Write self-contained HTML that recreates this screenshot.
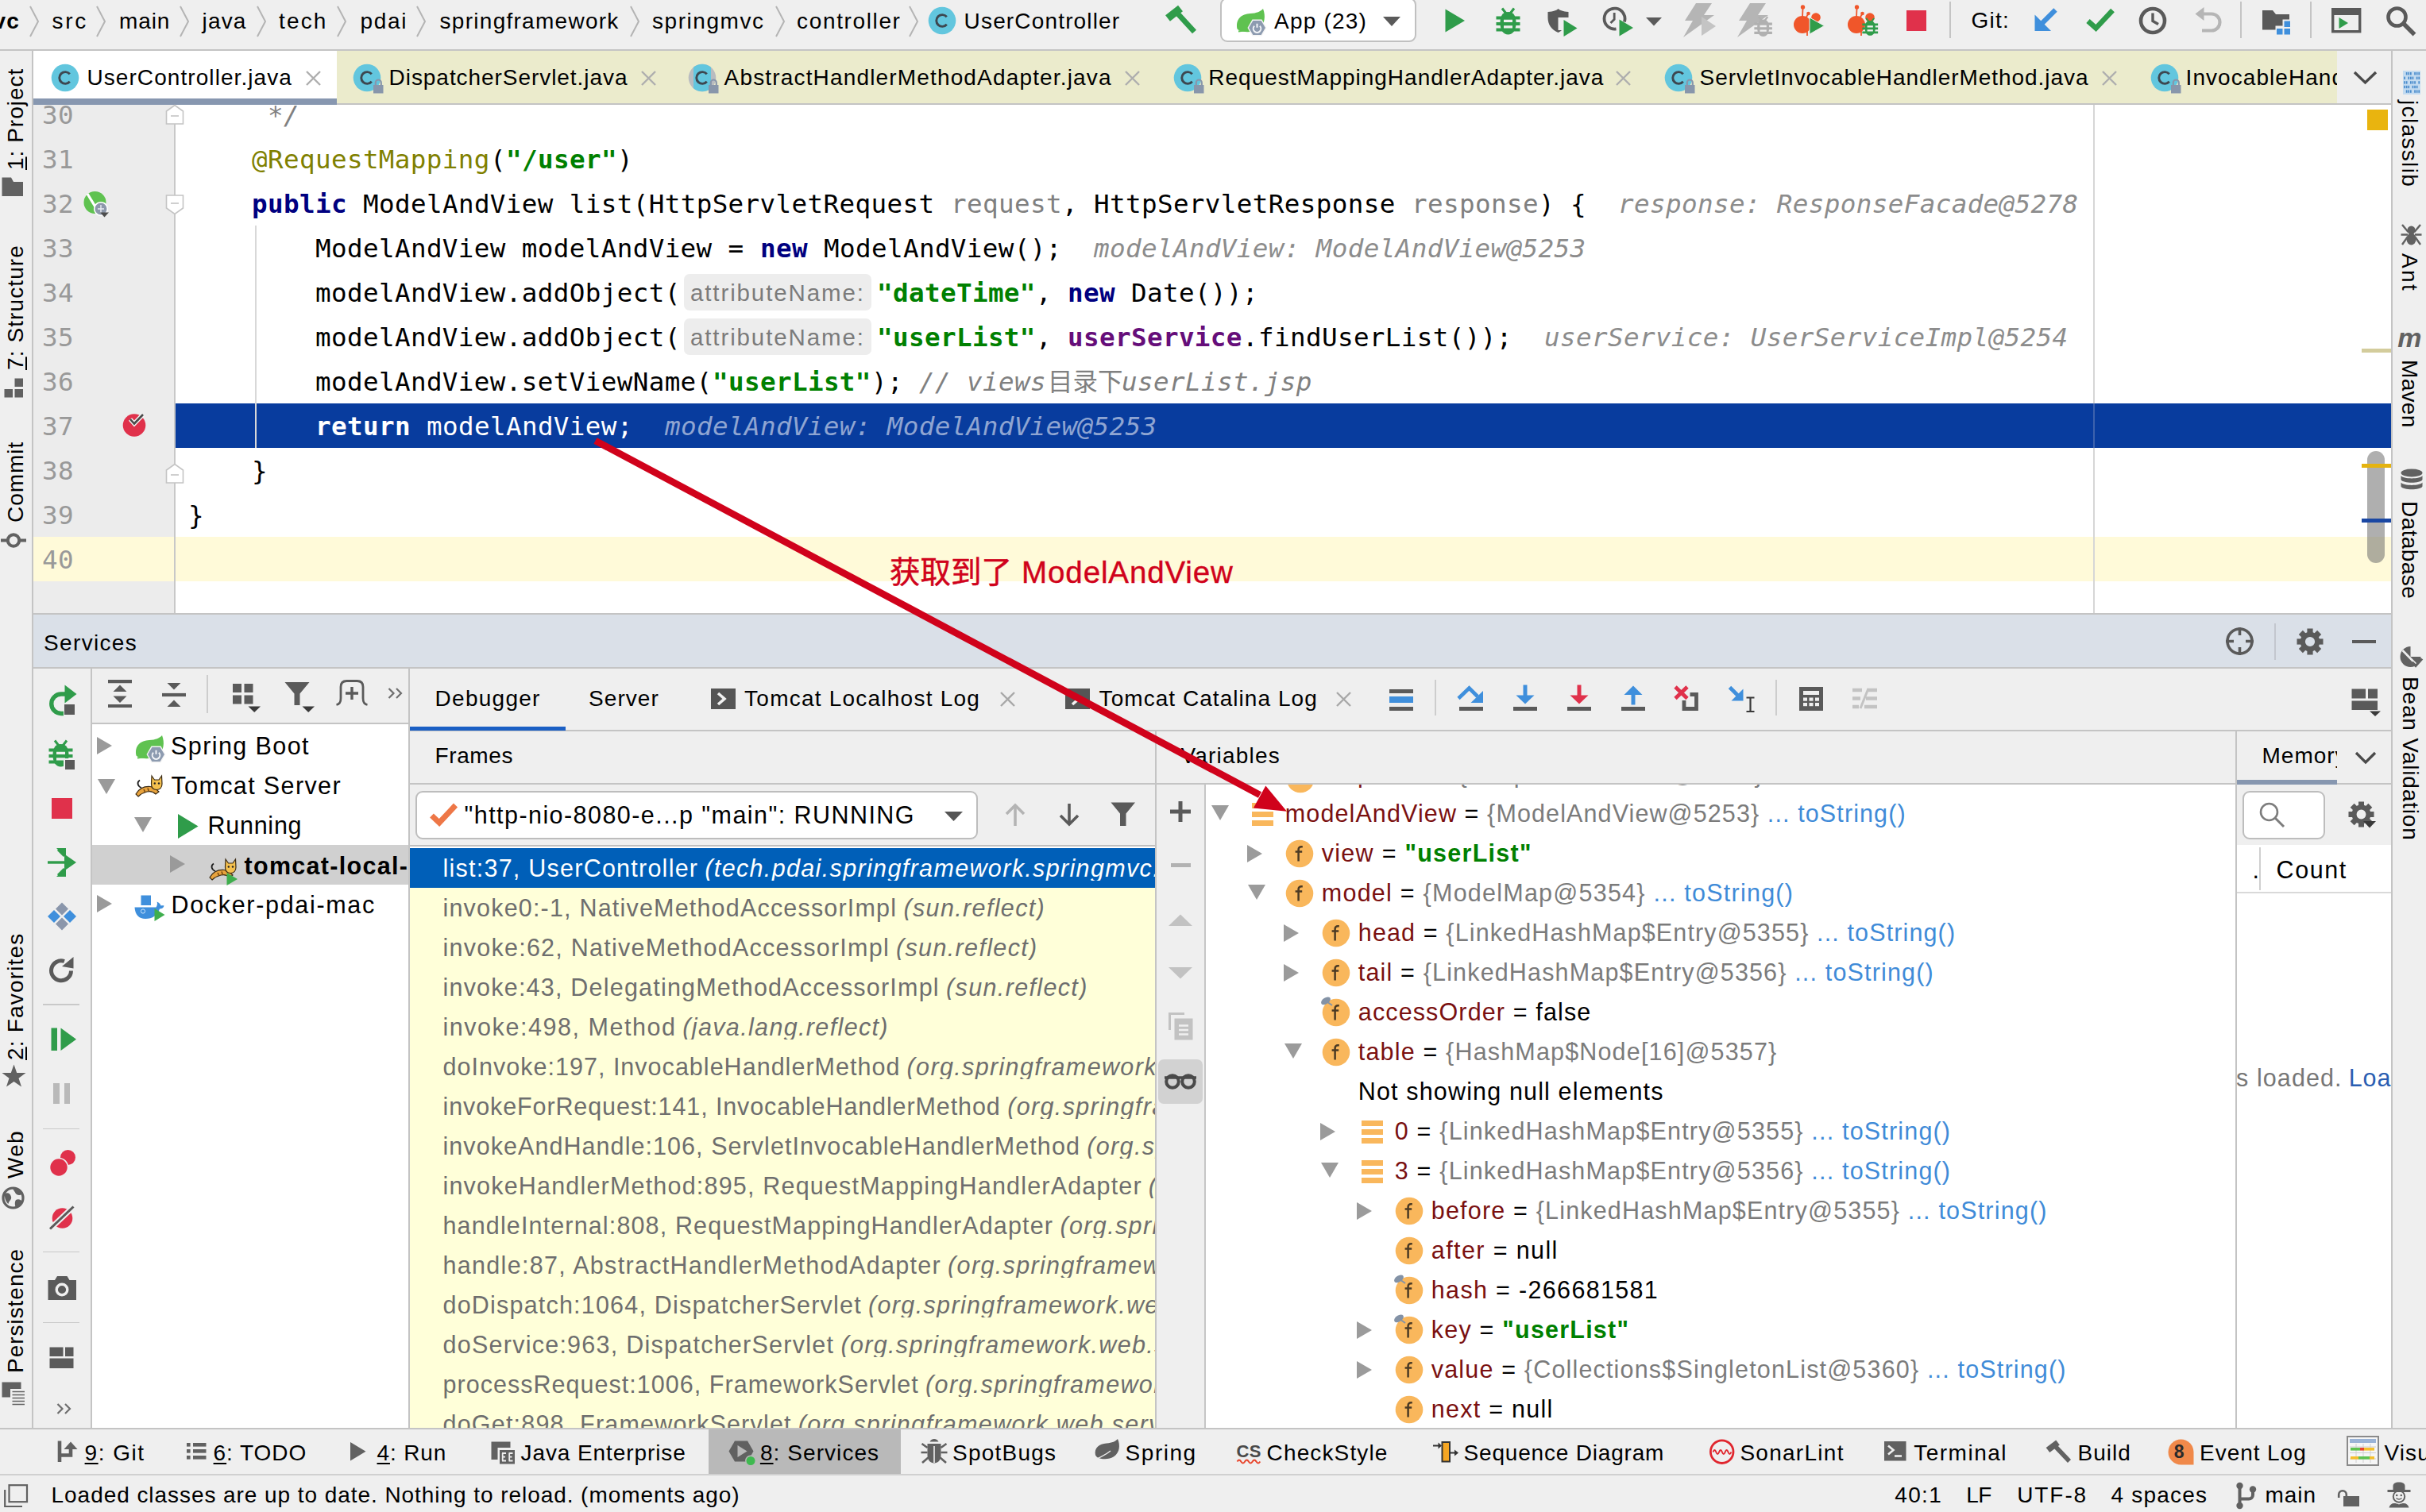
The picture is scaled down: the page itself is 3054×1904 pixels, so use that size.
<!DOCTYPE html>
<html lang="zh"><head><meta charset="utf-8"><title>IntelliJ IDEA - UserController.java</title>
<style>html,body{margin:0;padding:0;background:#efefef;width:3054px;height:1904px;overflow:hidden}#app{position:relative;width:3054px;height:1904px;overflow:hidden;font-family:"Liberation Sans","Noto Sans CJK SC",sans-serif}#app div,#app span,#app svg,#app i{position:absolute;white-space:pre}#app i{position:static}#app svg{overflow:visible}</style>
</head><body><div id="app">
<div style="left:0px;top:0px;width:3054px;height:1904px;background:#efefef;"></div>
<div style="left:0px;top:62px;width:3054px;height:2px;background:#c4c4c4;"></div>
<span style="font-family:'Liberation Sans','Noto Sans CJK SC',sans-serif;font-size:28.0px;line-height:28.0px;color:#000;font-weight:bold;letter-spacing:1.00px;left:-8.4px;top:12.7px;">vc</span>
<svg style="left:35px;top:6px;" width="16" height="42" viewBox="0 0 16 42"><path d="M3 2 L13 21 L3 40" fill="none" stroke="#b4b4b4" stroke-width="2"/></svg>
<svg style="left:119px;top:6px;" width="16" height="42" viewBox="0 0 16 42"><path d="M3 2 L13 21 L3 40" fill="none" stroke="#b4b4b4" stroke-width="2"/></svg>
<svg style="left:224px;top:6px;" width="16" height="42" viewBox="0 0 16 42"><path d="M3 2 L13 21 L3 40" fill="none" stroke="#b4b4b4" stroke-width="2"/></svg>
<svg style="left:321px;top:6px;" width="16" height="42" viewBox="0 0 16 42"><path d="M3 2 L13 21 L3 40" fill="none" stroke="#b4b4b4" stroke-width="2"/></svg>
<svg style="left:422px;top:6px;" width="16" height="42" viewBox="0 0 16 42"><path d="M3 2 L13 21 L3 40" fill="none" stroke="#b4b4b4" stroke-width="2"/></svg>
<svg style="left:522px;top:6px;" width="16" height="42" viewBox="0 0 16 42"><path d="M3 2 L13 21 L3 40" fill="none" stroke="#b4b4b4" stroke-width="2"/></svg>
<span style="font-family:'Liberation Sans','Noto Sans CJK SC',sans-serif;font-size:28.0px;line-height:28.0px;color:#000;letter-spacing:2.74px;left:65.4px;top:12.7px;">src</span>
<span style="font-family:'Liberation Sans','Noto Sans CJK SC',sans-serif;font-size:28.0px;line-height:28.0px;color:#000;letter-spacing:0.90px;left:150.0px;top:12.7px;">main</span>
<span style="font-family:'Liberation Sans','Noto Sans CJK SC',sans-serif;font-size:28.0px;line-height:28.0px;color:#000;letter-spacing:1.14px;left:254.6px;top:12.7px;">java</span>
<span style="font-family:'Liberation Sans','Noto Sans CJK SC',sans-serif;font-size:28.0px;line-height:28.0px;color:#000;letter-spacing:2.12px;left:351.1px;top:12.7px;">tech</span>
<span style="font-family:'Liberation Sans','Noto Sans CJK SC',sans-serif;font-size:28.0px;line-height:28.0px;color:#000;letter-spacing:1.62px;left:453.6px;top:12.7px;">pdai</span>
<span style="font-family:'Liberation Sans','Noto Sans CJK SC',sans-serif;font-size:28.0px;line-height:28.0px;color:#000;letter-spacing:1.27px;left:553.6px;top:12.7px;">springframework</span>
<svg style="left:791px;top:6px;" width="16" height="42" viewBox="0 0 16 42"><path d="M3 2 L13 21 L3 40" fill="none" stroke="#b4b4b4" stroke-width="2"/></svg>
<span style="font-family:'Liberation Sans','Noto Sans CJK SC',sans-serif;font-size:28.0px;line-height:28.0px;color:#000;letter-spacing:1.53px;left:821.1px;top:12.7px;">springmvc</span>
<svg style="left:974px;top:6px;" width="16" height="42" viewBox="0 0 16 42"><path d="M3 2 L13 21 L3 40" fill="none" stroke="#b4b4b4" stroke-width="2"/></svg>
<span style="font-family:'Liberation Sans','Noto Sans CJK SC',sans-serif;font-size:28.0px;line-height:28.0px;color:#000;letter-spacing:1.63px;left:1003.1px;top:12.7px;">controller</span>
<svg style="left:1142px;top:6px;" width="16" height="42" viewBox="0 0 16 42"><path d="M3 2 L13 21 L3 40" fill="none" stroke="#b4b4b4" stroke-width="2"/></svg>
<span style="font-family:'Liberation Sans','Noto Sans CJK SC',sans-serif;font-size:28.0px;line-height:28.0px;color:#000;letter-spacing:1.16px;left:1213.6px;top:12.7px;">UserController</span>
<div style="left:1536px;top:-3px;width:247px;height:56px;background:#fff;border:2px solid #c0c0c0;border-radius:9px;box-sizing:border-box;"></div>
<span style="font-family:'Liberation Sans','Noto Sans CJK SC',sans-serif;font-size:28.0px;line-height:28.0px;color:#000;letter-spacing:1.20px;left:1604.1px;top:12.7px;">App (23)</span>
<svg style="left:1741px;top:21px;" width="22" height="12" viewBox="0 0 22 12"><path d="M0 0 H22 L11 12 Z" fill="#5a5a5a"/></svg>
<div style="left:2454px;top:2px;width:2px;height:46px;background:#c4c4c4;"></div>
<div style="left:2820px;top:2px;width:2px;height:46px;background:#c4c4c4;"></div>
<div style="left:2908px;top:2px;width:2px;height:46px;background:#c4c4c4;"></div>
<span style="font-family:'Liberation Sans','Noto Sans CJK SC',sans-serif;font-size:28.0px;line-height:28.0px;color:#000;letter-spacing:1.18px;left:2481.6px;top:12.2px;">Git:</span>
<div style="left:42px;top:64px;width:2900px;height:66px;background:#ebebcc;"></div>
<div style="left:42px;top:130px;width:2968px;height:2px;background:#c4c4c4;"></div>
<div style="left:42px;top:64px;width:382px;height:68px;background:#fff;"></div>
<div style="left:42px;top:124px;width:382px;height:8px;background:#8797b0;"></div>
<div style="left:2942px;top:64px;width:68px;height:66px;background:#efefef;"></div>
<svg style="left:1166px;top:5.699999999999999px;" width="44" height="42" viewBox="0 0 44 42"><circle cx="20" cy="20" r="17.3" fill="#62c6de"/><path d="M25.8 15.2 A7.4 7.4 0 1 0 25.8 24.8" fill="none" stroke="#3d4750" stroke-width="2.9"/></svg>
<svg style="left:62px;top:77.7px;" width="44" height="42" viewBox="0 0 44 42"><circle cx="20" cy="20" r="17.3" fill="#62c6de"/><path d="M25.8 15.2 A7.4 7.4 0 1 0 25.8 24.8" fill="none" stroke="#3d4750" stroke-width="2.9"/></svg>
<span style="font-family:'Liberation Sans','Noto Sans CJK SC',sans-serif;font-size:28.0px;line-height:28.0px;color:#000;letter-spacing:1.08px;left:109.4px;top:83.5px;">UserController.java</span>
<svg style="left:384.6px;top:88.5px;" width="19" height="19" viewBox="0 0 19 19"><path d="M1 1 L18 18 M18 1 L1 18" stroke="#aeaeae" stroke-width="2.4" fill="none"/></svg>
<svg style="left:442px;top:77.5px;" width="44" height="42" viewBox="0 0 44 42"><circle cx="20" cy="20" r="17.3" fill="#62c6de"/><path d="M25.8 15.2 A7.4 7.4 0 1 0 25.8 24.8" fill="none" stroke="#3d4750" stroke-width="2.9"/><rect x="28" y="29" width="12.500" height="10.500" fill="#8896ab"/><path d="M30.800 30 V26 A3.500 3.500 0 0 1 37.800 26 V30" fill="none" stroke="#8896ab" stroke-width="2.200"/></svg>
<span style="font-family:'Liberation Sans','Noto Sans CJK SC',sans-serif;font-size:28.0px;line-height:28.0px;color:#000;letter-spacing:0.94px;left:489.6px;top:83.5px;">DispatcherServlet.java</span>
<svg style="left:806.8px;top:88.5px;" width="19" height="19" viewBox="0 0 19 19"><path d="M1 1 L18 18 M18 1 L1 18" stroke="#aeaeae" stroke-width="2.4" fill="none"/></svg>
<svg style="left:864px;top:77.5px;" width="44" height="42" viewBox="0 0 44 42"><circle cx="20" cy="20" r="17.3" fill="#b9bcc0"/><path d="M9 6.650 A17.300 17.300 0 0 1 31 6.650 L31 33.350 A17.300 17.300 0 0 1 9 33.350 Z" fill="#62c6de"/><path d="M25.8 15.2 A7.4 7.4 0 1 0 25.8 24.8" fill="none" stroke="#3d4750" stroke-width="2.9"/><rect x="28" y="29" width="12.500" height="10.500" fill="#8896ab"/><path d="M30.800 30 V26 A3.500 3.500 0 0 1 37.800 26 V30" fill="none" stroke="#8896ab" stroke-width="2.200"/></svg>
<span style="font-family:'Liberation Sans','Noto Sans CJK SC',sans-serif;font-size:28.0px;line-height:28.0px;color:#000;letter-spacing:1.16px;left:911.6px;top:83.5px;">AbstractHandlerMethodAdapter.java</span>
<svg style="left:1415.5px;top:88.5px;" width="19" height="19" viewBox="0 0 19 19"><path d="M1 1 L18 18 M18 1 L1 18" stroke="#aeaeae" stroke-width="2.4" fill="none"/></svg>
<svg style="left:1475px;top:77.5px;" width="44" height="42" viewBox="0 0 44 42"><circle cx="20" cy="20" r="17.3" fill="#62c6de"/><path d="M25.8 15.2 A7.4 7.4 0 1 0 25.8 24.8" fill="none" stroke="#3d4750" stroke-width="2.9"/><rect x="28" y="29" width="12.500" height="10.500" fill="#8896ab"/><path d="M30.800 30 V26 A3.500 3.500 0 0 1 37.800 26 V30" fill="none" stroke="#8896ab" stroke-width="2.200"/></svg>
<span style="font-family:'Liberation Sans','Noto Sans CJK SC',sans-serif;font-size:28.0px;line-height:28.0px;color:#000;letter-spacing:0.99px;left:1521.3px;top:83.5px;">RequestMappingHandlerAdapter.java</span>
<svg style="left:2033.5px;top:88.5px;" width="19" height="19" viewBox="0 0 19 19"><path d="M1 1 L18 18 M18 1 L1 18" stroke="#aeaeae" stroke-width="2.4" fill="none"/></svg>
<svg style="left:2092.5px;top:77.5px;" width="44" height="42" viewBox="0 0 44 42"><circle cx="20" cy="20" r="17.3" fill="#62c6de"/><path d="M25.8 15.2 A7.4 7.4 0 1 0 25.8 24.8" fill="none" stroke="#3d4750" stroke-width="2.9"/><rect x="28" y="29" width="12.500" height="10.500" fill="#8896ab"/><path d="M30.800 30 V26 A3.500 3.500 0 0 1 37.800 26 V30" fill="none" stroke="#8896ab" stroke-width="2.200"/></svg>
<span style="font-family:'Liberation Sans','Noto Sans CJK SC',sans-serif;font-size:28.0px;line-height:28.0px;color:#000;letter-spacing:0.95px;left:2139.6px;top:83.5px;">ServletInvocableHandlerMethod.java</span>
<svg style="left:2646px;top:88.5px;" width="19" height="19" viewBox="0 0 19 19"><path d="M1 1 L18 18 M18 1 L1 18" stroke="#aeaeae" stroke-width="2.4" fill="none"/></svg>
<svg style="left:2705px;top:77.5px;" width="44" height="42" viewBox="0 0 44 42"><circle cx="20" cy="20" r="17.3" fill="#62c6de"/><path d="M25.8 15.2 A7.4 7.4 0 1 0 25.8 24.8" fill="none" stroke="#3d4750" stroke-width="2.9"/><rect x="28" y="29" width="12.500" height="10.500" fill="#8896ab"/><path d="M30.800 30 V26 A3.500 3.500 0 0 1 37.800 26 V30" fill="none" stroke="#8896ab" stroke-width="2.200"/></svg>
<div style="left:2740px;top:64px;width:202px;height:66px;overflow:hidden"><span style="left:11.6px;top:19.5px;font-family:'Liberation Sans','Noto Sans CJK SC',sans-serif;font-size:28.0px;line-height:28.0px;letter-spacing:1.05px;color:#000">InvocableHandlerMethod.java</span></div>
<svg style="left:2962px;top:88px;" width="32" height="20" viewBox="0 0 32 20"><path d="M2 3 L15.5 16 L29 3" fill="none" stroke="#4a4a4a" stroke-width="3.4"/></svg>
<div style="left:40px;top:64px;width:2px;height:1735px;background:#c4c4c4;"></div>
<div style="left:3010px;top:64px;width:2px;height:1735px;background:#c4c4c4;"></div>
<div style="left:42px;top:132px;width:2968px;height:640px;background:#fff;"></div>
<div style="left:42px;top:132px;width:178px;height:640px;background:#ececec;"></div>
<div style="left:219px;top:132px;width:2px;height:640px;background:#c8c8c8;"></div>
<div style="left:42px;top:676px;width:2968px;height:56px;background:#fffad9;"></div>
<div style="left:219px;top:676px;width:2px;height:56px;background:#c8c8c8;"></div>
<div style="left:221px;top:508px;width:2789px;height:56px;background:#083c9e;"></div>
<div style="left:2635px;top:132px;width:2px;height:640px;background:#d6d6d6;"></div>
<div style="left:2635px;top:508px;width:2px;height:56px;background:#3d62ad;"></div>
<div style="left:321px;top:284px;width:2px;height:280px;background:#d8d8d8;"></div>
<div style="left:321px;top:508px;width:2px;height:56px;background:#d8d8d8;"></div>
<span style="font-family:'DejaVu Sans Mono','Noto Sans CJK SC',monospace;font-size:32.6px;line-height:32.6px;color:#999999;letter-spacing:0.37px;left:53.0px;top:129.1px;">30</span>
<span style="font-family:'DejaVu Sans Mono','Noto Sans CJK SC',monospace;font-size:32.6px;line-height:32.6px;color:#999999;letter-spacing:0.37px;left:53.0px;top:185.1px;">31</span>
<span style="font-family:'DejaVu Sans Mono','Noto Sans CJK SC',monospace;font-size:32.6px;line-height:32.6px;color:#999999;letter-spacing:0.37px;left:53.0px;top:241.1px;">32</span>
<span style="font-family:'DejaVu Sans Mono','Noto Sans CJK SC',monospace;font-size:32.6px;line-height:32.6px;color:#999999;letter-spacing:0.37px;left:53.0px;top:297.1px;">33</span>
<span style="font-family:'DejaVu Sans Mono','Noto Sans CJK SC',monospace;font-size:32.6px;line-height:32.6px;color:#999999;letter-spacing:0.37px;left:53.0px;top:353.1px;">34</span>
<span style="font-family:'DejaVu Sans Mono','Noto Sans CJK SC',monospace;font-size:32.6px;line-height:32.6px;color:#999999;letter-spacing:0.37px;left:53.0px;top:409.1px;">35</span>
<span style="font-family:'DejaVu Sans Mono','Noto Sans CJK SC',monospace;font-size:32.6px;line-height:32.6px;color:#999999;letter-spacing:0.37px;left:53.0px;top:465.1px;">36</span>
<span style="font-family:'DejaVu Sans Mono','Noto Sans CJK SC',monospace;font-size:32.6px;line-height:32.6px;color:#999999;letter-spacing:0.37px;left:53.0px;top:521.1px;">37</span>
<span style="font-family:'DejaVu Sans Mono','Noto Sans CJK SC',monospace;font-size:32.6px;line-height:32.6px;color:#999999;letter-spacing:0.37px;left:53.0px;top:577.1px;">38</span>
<span style="font-family:'DejaVu Sans Mono','Noto Sans CJK SC',monospace;font-size:32.6px;line-height:32.6px;color:#999999;letter-spacing:0.37px;left:53.0px;top:633.1px;">39</span>
<span style="font-family:'DejaVu Sans Mono','Noto Sans CJK SC',monospace;font-size:32.6px;line-height:32.6px;color:#999999;letter-spacing:0.37px;left:53.0px;top:689.1px;">40</span>
<span style="font-family:'DejaVu Sans Mono','Noto Sans CJK SC',monospace;font-size:32.6px;line-height:32.6px;color:#808080;font-style:italic;letter-spacing:0.37px;left:337.0px;top:129.1px;">*/</span>
<span style="font-family:'DejaVu Sans Mono','Noto Sans CJK SC',monospace;font-size:32.6px;line-height:32.6px;color:#808000;letter-spacing:0.37px;left:317.0px;top:185.1px;">@RequestMapping</span>
<span style="font-family:'DejaVu Sans Mono','Noto Sans CJK SC',monospace;font-size:32.6px;line-height:32.6px;color:#000;letter-spacing:0.37px;left:617.0px;top:185.1px;">(</span>
<span style="font-family:'DejaVu Sans Mono','Noto Sans CJK SC',monospace;font-size:32.6px;line-height:32.6px;color:#008000;font-weight:bold;letter-spacing:0.37px;left:637.0px;top:185.1px;">"/user"</span>
<span style="font-family:'DejaVu Sans Mono','Noto Sans CJK SC',monospace;font-size:32.6px;line-height:32.6px;color:#000;letter-spacing:0.37px;left:777.0px;top:185.1px;">)</span>
<span style="font-family:'DejaVu Sans Mono','Noto Sans CJK SC',monospace;font-size:32.6px;line-height:32.6px;color:#000080;font-weight:bold;letter-spacing:0.37px;left:317.0px;top:241.1px;">public</span>
<span style="font-family:'DejaVu Sans Mono','Noto Sans CJK SC',monospace;font-size:32.6px;line-height:32.6px;color:#000;letter-spacing:0.37px;left:457.0px;top:241.1px;">ModelAndView list(HttpServletRequest</span>
<span style="font-family:'DejaVu Sans Mono','Noto Sans CJK SC',monospace;font-size:32.6px;line-height:32.6px;color:#808080;letter-spacing:0.37px;left:1197.0px;top:241.1px;">request</span>
<span style="font-family:'DejaVu Sans Mono','Noto Sans CJK SC',monospace;font-size:32.6px;line-height:32.6px;color:#000;letter-spacing:0.37px;left:1337.0px;top:241.1px;">, HttpServletResponse</span>
<span style="font-family:'DejaVu Sans Mono','Noto Sans CJK SC',monospace;font-size:32.6px;line-height:32.6px;color:#808080;letter-spacing:0.37px;left:1777.0px;top:241.1px;">response</span>
<span style="font-family:'DejaVu Sans Mono','Noto Sans CJK SC',monospace;font-size:32.6px;line-height:32.6px;color:#000;letter-spacing:0.37px;left:1937.0px;top:241.1px;">) {</span>
<span style="font-family:'DejaVu Sans Mono','Noto Sans CJK SC',monospace;font-size:32.6px;line-height:32.6px;color:#8c8c8c;font-style:italic;letter-spacing:0.37px;left:2037.0px;top:241.1px;">response: ResponseFacade@5278</span>
<span style="font-family:'DejaVu Sans Mono','Noto Sans CJK SC',monospace;font-size:32.6px;line-height:32.6px;color:#000;letter-spacing:0.37px;left:397.0px;top:297.1px;">ModelAndView modelAndView =</span>
<span style="font-family:'DejaVu Sans Mono','Noto Sans CJK SC',monospace;font-size:32.6px;line-height:32.6px;color:#000080;font-weight:bold;letter-spacing:0.37px;left:957.0px;top:297.1px;">new</span>
<span style="font-family:'DejaVu Sans Mono','Noto Sans CJK SC',monospace;font-size:32.6px;line-height:32.6px;color:#000;letter-spacing:0.37px;left:1037.0px;top:297.1px;">ModelAndView();</span>
<span style="font-family:'DejaVu Sans Mono','Noto Sans CJK SC',monospace;font-size:32.6px;line-height:32.6px;color:#8c8c8c;font-style:italic;letter-spacing:0.37px;left:1377.0px;top:297.1px;">modelAndView: ModelAndView@5253</span>
<span style="font-family:'DejaVu Sans Mono','Noto Sans CJK SC',monospace;font-size:32.6px;line-height:32.6px;color:#000;letter-spacing:0.37px;left:397.0px;top:353.1px;">modelAndView.addObject(</span>
<div style="left:861px;top:345px;width:236px;height:46px;background:#ededed;border-radius:7px;"></div>
<span style="font-family:'Liberation Sans','Noto Sans CJK SC',sans-serif;font-size:29.5px;line-height:29.5px;color:#7b7b7b;letter-spacing:1.88px;left:869.0px;top:353.9px;">attributeName:</span>
<span style="font-family:'DejaVu Sans Mono','Noto Sans CJK SC',monospace;font-size:32.6px;line-height:32.6px;color:#008000;font-weight:bold;letter-spacing:0.37px;left:1104.0px;top:353.1px;">"dateTime"</span>
<span style="font-family:'DejaVu Sans Mono','Noto Sans CJK SC',monospace;font-size:32.6px;line-height:32.6px;color:#000;letter-spacing:0.37px;left:1304.0px;top:353.1px;">,</span>
<span style="font-family:'DejaVu Sans Mono','Noto Sans CJK SC',monospace;font-size:32.6px;line-height:32.6px;color:#000080;font-weight:bold;letter-spacing:0.37px;left:1344.0px;top:353.1px;">new</span>
<span style="font-family:'DejaVu Sans Mono','Noto Sans CJK SC',monospace;font-size:32.6px;line-height:32.6px;color:#000;letter-spacing:0.37px;left:1424.0px;top:353.1px;">Date());</span>
<span style="font-family:'DejaVu Sans Mono','Noto Sans CJK SC',monospace;font-size:32.6px;line-height:32.6px;color:#000;letter-spacing:0.37px;left:397.0px;top:409.1px;">modelAndView.addObject(</span>
<div style="left:861px;top:401px;width:236px;height:46px;background:#ededed;border-radius:7px;"></div>
<span style="font-family:'Liberation Sans','Noto Sans CJK SC',sans-serif;font-size:29.5px;line-height:29.5px;color:#7b7b7b;letter-spacing:1.88px;left:869.0px;top:409.9px;">attributeName:</span>
<span style="font-family:'DejaVu Sans Mono','Noto Sans CJK SC',monospace;font-size:32.6px;line-height:32.6px;color:#008000;font-weight:bold;letter-spacing:0.37px;left:1104.0px;top:409.1px;">"userList"</span>
<span style="font-family:'DejaVu Sans Mono','Noto Sans CJK SC',monospace;font-size:32.6px;line-height:32.6px;color:#000;letter-spacing:0.37px;left:1304.0px;top:409.1px;">,</span>
<span style="font-family:'DejaVu Sans Mono','Noto Sans CJK SC',monospace;font-size:32.6px;line-height:32.6px;color:#660e7a;font-weight:bold;letter-spacing:0.37px;left:1344.0px;top:409.1px;">userService</span>
<span style="font-family:'DejaVu Sans Mono','Noto Sans CJK SC',monospace;font-size:32.6px;line-height:32.6px;color:#000;letter-spacing:0.37px;left:1564.0px;top:409.1px;">.findUserList());</span>
<span style="font-family:'DejaVu Sans Mono','Noto Sans CJK SC',monospace;font-size:32.6px;line-height:32.6px;color:#8c8c8c;font-style:italic;letter-spacing:0.37px;left:1944.0px;top:409.1px;">userService: UserServiceImpl@5254</span>
<span style="font-family:'DejaVu Sans Mono','Noto Sans CJK SC',monospace;font-size:32.6px;line-height:32.6px;color:#000;letter-spacing:0.37px;left:397.0px;top:465.1px;">modelAndView.setViewName(</span>
<span style="font-family:'DejaVu Sans Mono','Noto Sans CJK SC',monospace;font-size:32.6px;line-height:32.6px;color:#008000;font-weight:bold;letter-spacing:0.37px;left:897.0px;top:465.1px;">"userList"</span>
<span style="font-family:'DejaVu Sans Mono','Noto Sans CJK SC',monospace;font-size:32.6px;line-height:32.6px;color:#000;letter-spacing:0.37px;left:1097.0px;top:465.1px;">);</span>
<span style="font-family:'DejaVu Sans Mono','Noto Sans CJK SC',monospace;font-size:32.6px;line-height:32.6px;color:#808080;font-style:italic;letter-spacing:0.37px;left:1157.0px;top:465.1px;">// views</span>
<span style="font-family:'Liberation Sans','Noto Sans CJK SC',sans-serif;font-size:31.5px;line-height:31.5px;color:#808080;left:1319.0px;top:465.7px;">目录下</span>
<span style="font-family:'DejaVu Sans Mono','Noto Sans CJK SC',monospace;font-size:32.6px;line-height:32.6px;color:#808080;font-style:italic;letter-spacing:0.37px;left:1412.0px;top:465.1px;">userList.jsp</span>
<span style="font-family:'DejaVu Sans Mono','Noto Sans CJK SC',monospace;font-size:32.6px;line-height:32.6px;color:#fff;font-weight:bold;letter-spacing:0.37px;left:397.0px;top:521.1px;">return</span>
<span style="font-family:'DejaVu Sans Mono','Noto Sans CJK SC',monospace;font-size:32.6px;line-height:32.6px;color:#fff;letter-spacing:0.37px;left:537.0px;top:521.1px;">modelAndView;</span>
<span style="font-family:'DejaVu Sans Mono','Noto Sans CJK SC',monospace;font-size:32.6px;line-height:32.6px;color:#8fa5d2;font-style:italic;letter-spacing:0.37px;left:837.0px;top:521.1px;">modelAndView: ModelAndView@5253</span>
<span style="font-family:'DejaVu Sans Mono','Noto Sans CJK SC',monospace;font-size:32.6px;line-height:32.6px;color:#000;letter-spacing:0.37px;left:317.0px;top:577.1px;">}</span>
<span style="font-family:'DejaVu Sans Mono','Noto Sans CJK SC',monospace;font-size:32.6px;line-height:32.6px;color:#000;letter-spacing:0.37px;left:237.0px;top:633.1px;">}</span>
<svg style="left:208px;top:131px;" width="24" height="26" viewBox="0 0 24 26"><path d="M1.5 25 V9 L12 1.5 L22.5 9 V25 Z" fill="#fff" stroke="#c4c4c4" stroke-width="1.6"/><path d="M7 15 H17" stroke="#c4c4c4" stroke-width="1.6"/></svg>
<svg style="left:208px;top:245px;" width="24" height="26" viewBox="0 0 24 26"><path d="M1.5 1 V17 L12 24.5 L22.5 17 V1 Z" fill="#fff" stroke="#c4c4c4" stroke-width="1.6"/><path d="M7 11 H17" stroke="#c4c4c4" stroke-width="1.6"/></svg>
<svg style="left:208px;top:583px;" width="24" height="26" viewBox="0 0 24 26"><path d="M1.5 25 V9 L12 1.5 L22.5 9 V25 Z" fill="#fff" stroke="#c4c4c4" stroke-width="1.6"/><path d="M7 15 H17" stroke="#c4c4c4" stroke-width="1.6"/></svg>
<svg style="left:105px;top:240px;" width="36" height="36" viewBox="0 0 36 36"><circle cx="14.5" cy="15" r="14" fill="#5fc250"/><path d="M5 4 L16 22" stroke="#fff" stroke-width="3.2"/><circle cx="22" cy="23" r="8.3" fill="#8d98ab" stroke="#fff" stroke-width="1.6"/><path d="M18 23 h8 M22 18 v10" stroke="#e8ecf2" stroke-width="1.4" fill="none"/><path d="M21 27.5 h11 l-5.5 6 z" fill="#4d4d4d"/></svg>
<svg style="left:152px;top:517px;" width="36" height="36" viewBox="0 0 36 36"><circle cx="17" cy="18.5" r="14.3" fill="#e0314b"/><path d="M12 11 L17 16.5 L28 5" fill="none" stroke="#f4f4f4" stroke-width="5.5"/><path d="M12 11 L17 16.5 L28 5" fill="none" stroke="#4a4a4a" stroke-width="2.6"/></svg>
<div style="left:2980px;top:138px;width:26px;height:26px;background:#e9b40f;"></div>
<div style="left:2973px;top:439px;width:37px;height:5px;background:#d3cc9c;"></div>
<div style="left:2980px;top:568px;width:22px;height:141px;background:rgba(110,110,110,0.55);border-radius:11px;"></div>
<div style="left:2973px;top:584px;width:37px;height:5px;background:#e4b310;"></div>
<div style="left:2973px;top:653px;width:37px;height:5px;background:#1a47a3;"></div>
<div style="left:42px;top:772px;width:2968px;height:2px;background:#c4c4c4;"></div>
<div style="left:42px;top:774px;width:2968px;height:66px;background:#dae0e8;"></div>
<div style="left:42px;top:840px;width:2968px;height:2px;background:#c4c4c4;"></div>
<span style="font-family:'Liberation Sans','Noto Sans CJK SC',sans-serif;font-size:28.0px;line-height:28.0px;color:#000;letter-spacing:1.32px;left:55.1px;top:795.7px;">Services</span>
<div style="left:42px;top:842px;width:2968px;height:956px;background:#efefef;"></div>
<div style="left:114px;top:842px;width:2px;height:956px;background:#c4c4c4;"></div>
<div style="left:116px;top:912px;width:398px;height:886px;background:#fff;"></div>
<div style="left:116px;top:910px;width:398px;height:2px;background:#c4c4c4;"></div>
<div style="left:514px;top:842px;width:2px;height:956px;background:#c4c4c4;"></div>
<div style="left:116px;top:1064px;width:398px;height:50px;background:#d0d0d0;"></div>
<svg style="left:122px;top:927.5px;" width="19" height="22" viewBox="0 0 19 22"><path d="M0 0 L19 11.0 L0 22 Z" fill="#9a9a9a"/></svg>
<span style="font-family:'Liberation Sans','Noto Sans CJK SC',sans-serif;font-size:30.5px;line-height:30.5px;color:#000;letter-spacing:1.42px;left:215.0px;top:924.1px;">Spring Boot</span>
<svg style="left:123px;top:981px;" width="22" height="19" viewBox="0 0 22 19"><path d="M0 0 H22 L11.0 19 Z" fill="#9a9a9a"/></svg>
<span style="font-family:'Liberation Sans','Noto Sans CJK SC',sans-serif;font-size:30.5px;line-height:30.5px;color:#000;letter-spacing:1.37px;left:215.5px;top:974.1px;">Tomcat Server</span>
<svg style="left:169px;top:1028.5px;" width="22" height="19" viewBox="0 0 22 19"><path d="M0 0 H22 L11.0 19 Z" fill="#9a9a9a"/></svg>
<svg style="left:223.5px;top:1024.5px;" width="26" height="31" viewBox="0 0 26 31"><path d="M0 0 L25.5 15.5 L0 31 Z" fill="#2f9c4a"/></svg>
<span style="font-family:'Liberation Sans','Noto Sans CJK SC',sans-serif;font-size:30.5px;line-height:30.5px;color:#000;letter-spacing:0.74px;left:261.5px;top:1024.1px;">Running</span>
<svg style="left:214px;top:1077px;" width="19" height="22" viewBox="0 0 19 22"><path d="M0 0 L19 11.0 L0 22 Z" fill="#9a9a9a"/></svg>
<div style="left:300px;top:1064px;width:214px;height:50px;overflow:hidden"><span style="left:7.5px;top:10.5px;font-family:'Liberation Sans','Noto Sans CJK SC',sans-serif;font-size:30.5px;line-height:30.5px;font-weight:bold;letter-spacing:1.3px;color:#000">tomcat-local-springmvc</span></div>
<svg style="left:122px;top:1127px;" width="19" height="22" viewBox="0 0 19 22"><path d="M0 0 L19 11.0 L0 22 Z" fill="#9a9a9a"/></svg>
<span style="font-family:'Liberation Sans','Noto Sans CJK SC',sans-serif;font-size:30.5px;line-height:30.5px;color:#000;letter-spacing:1.68px;left:215.5px;top:1124.1px;">Docker-pdai-mac</span>
<div style="left:516px;top:919px;width:2494px;height:2px;background:#c4c4c4;"></div>
<div style="left:516px;top:914.5px;width:196px;height:5px;background:#1b5fc4;"></div>
<span style="font-family:'Liberation Sans','Noto Sans CJK SC',sans-serif;font-size:28.0px;line-height:28.0px;color:#000;letter-spacing:1.26px;left:547.6px;top:866.2px;">Debugger</span>
<span style="font-family:'Liberation Sans','Noto Sans CJK SC',sans-serif;font-size:28.0px;line-height:28.0px;color:#000;letter-spacing:1.07px;left:741.0px;top:866.2px;">Server</span>
<svg style="left:894.5px;top:867px;" width="31" height="26" viewBox="0 0 31 26"><rect width="31" height="26" fill="#555"/><path d="M9 6 L17 13 L9 20" fill="none" stroke="#f2f2f2" stroke-width="3.6"/></svg>
<span style="font-family:'Liberation Sans','Noto Sans CJK SC',sans-serif;font-size:28.0px;line-height:28.0px;color:#000;letter-spacing:1.23px;left:937.1px;top:866.2px;">Tomcat Localhost Log</span>
<svg style="left:1258.5px;top:871px;" width="19" height="19" viewBox="0 0 19 19"><path d="M1 1 L18 18 M18 1 L1 18" stroke="#a8a8a8" stroke-width="2.4" fill="none"/></svg>
<svg style="left:1341px;top:867px;" width="31" height="26" viewBox="0 0 31 26"><rect width="31" height="26" fill="#555"/><path d="M9 6 L17 13 L9 20" fill="none" stroke="#f2f2f2" stroke-width="3.6"/></svg>
<span style="font-family:'Liberation Sans','Noto Sans CJK SC',sans-serif;font-size:28.0px;line-height:28.0px;color:#000;letter-spacing:1.05px;left:1383.6px;top:866.2px;">Tomcat Catalina Log</span>
<svg style="left:1682px;top:871px;" width="19" height="19" viewBox="0 0 19 19"><path d="M1 1 L18 18 M18 1 L1 18" stroke="#a8a8a8" stroke-width="2.4" fill="none"/></svg>
<div style="left:1806px;top:856px;width:2px;height:45px;background:#cdcdcd;"></div>
<div style="left:2235px;top:856px;width:2px;height:45px;background:#cdcdcd;"></div>
<span style="font-family:'Liberation Sans','Noto Sans CJK SC',sans-serif;font-size:28.0px;line-height:28.0px;color:#000;letter-spacing:0.58px;left:547.6px;top:937.7px;">Frames</span>
<div style="left:516px;top:986px;width:2494px;height:2px;background:#c4c4c4;"></div>
<div style="left:1454px;top:921px;width:2px;height:877px;background:#c4c4c4;"></div>
<div style="left:523px;top:996px;width:708px;height:61px;background:#fff;border:2px solid #bdbdbd;border-radius:9px;box-sizing:border-box;"></div>
<svg style="left:540px;top:1010px;" width="38" height="30" viewBox="0 0 38 30"><path d="M3.5 17 L13 26 L33.5 4" fill="none" stroke="#ee7747" stroke-width="7"/></svg>
<span style="font-family:'Liberation Sans','Noto Sans CJK SC',sans-serif;font-size:30.5px;line-height:30.5px;color:#000;letter-spacing:1.44px;left:584.5px;top:1011.1px;">"htt<span style="position:static">p</span>-nio-8080-e...p "main": RUNNING</span>
<svg style="left:1189px;top:1022px;" width="23" height="12" viewBox="0 0 23 12"><path d="M0 0 H23 L11.5 12 Z" fill="#555"/></svg>
<div style="left:516px;top:1064px;width:938px;height:2px;background:#bfbfbf;"></div>
<div style="left:516px;top:1066px;width:938px;height:2px;background:#fff;"></div>
<div style="left:516px;top:1068px;width:938px;height:730px;background:#ffffd9;"></div>
<div style="left:516px;top:1068px;width:938px;height:50px;background:#005fb8;"></div>
<span style="font-family:'Liberation Sans','Noto Sans CJK SC',sans-serif;font-size:30.5px;line-height:30.5px;color:#fff;letter-spacing:1.24px;left:557.5px;top:1078.1px;">list:37, UserController</span>
<span style="font-family:'Liberation Sans','Noto Sans CJK SC',sans-serif;font-size:30.5px;line-height:30.5px;color:#fff;font-style:italic;letter-spacing:1.35px;left:887.3px;top:1078.1px;width:566.7px;overflow:hidden;">(tech.pdai.springframework.springmvc.controller)</span>
<span style="font-family:'Liberation Sans','Noto Sans CJK SC',sans-serif;font-size:30.5px;line-height:30.5px;color:#6e6e6e;letter-spacing:1.19px;left:557.5px;top:1128.1px;">invoke0:-1, NativeMethodAccessorImpl</span>
<span style="font-family:'Liberation Sans','Noto Sans CJK SC',sans-serif;font-size:30.5px;line-height:30.5px;color:#6e6e6e;font-style:italic;letter-spacing:1.35px;left:1137.5px;top:1128.1px;width:316.5px;overflow:hidden;">(sun.reflect)</span>
<span style="font-family:'Liberation Sans','Noto Sans CJK SC',sans-serif;font-size:30.5px;line-height:30.5px;color:#6e6e6e;letter-spacing:1.25px;left:557.5px;top:1178.1px;">invoke:62, NativeMethodAccessorImpl</span>
<span style="font-family:'Liberation Sans','Noto Sans CJK SC',sans-serif;font-size:30.5px;line-height:30.5px;color:#6e6e6e;font-style:italic;letter-spacing:1.35px;left:1128.0px;top:1178.1px;width:326.0px;overflow:hidden;">(sun.reflect)</span>
<span style="font-family:'Liberation Sans','Noto Sans CJK SC',sans-serif;font-size:30.5px;line-height:30.5px;color:#6e6e6e;letter-spacing:1.21px;left:557.5px;top:1228.1px;">invoke:43, DelegatingMethodAccessorImpl</span>
<span style="font-family:'Liberation Sans','Noto Sans CJK SC',sans-serif;font-size:30.5px;line-height:30.5px;color:#6e6e6e;font-style:italic;letter-spacing:1.35px;left:1191.1px;top:1228.1px;width:262.9px;overflow:hidden;">(sun.reflect)</span>
<span style="font-family:'Liberation Sans','Noto Sans CJK SC',sans-serif;font-size:30.5px;line-height:30.5px;color:#6e6e6e;letter-spacing:1.54px;left:557.5px;top:1278.1px;">invoke:498, Method</span>
<span style="font-family:'Liberation Sans','Noto Sans CJK SC',sans-serif;font-size:30.5px;line-height:30.5px;color:#6e6e6e;font-style:italic;letter-spacing:1.35px;left:859.3px;top:1278.1px;width:594.7px;overflow:hidden;">(java.lang.reflect)</span>
<span style="font-family:'Liberation Sans','Noto Sans CJK SC',sans-serif;font-size:30.5px;line-height:30.5px;color:#6e6e6e;letter-spacing:1.02px;left:557.5px;top:1328.1px;">doInvoke:197, InvocableHandlerMethod</span>
<span style="font-family:'Liberation Sans','Noto Sans CJK SC',sans-serif;font-size:30.5px;line-height:30.5px;color:#6e6e6e;font-style:italic;letter-spacing:1.35px;left:1141.6px;top:1328.1px;width:312.4px;overflow:hidden;">(org.springframework.web.method.support)</span>
<span style="font-family:'Liberation Sans','Noto Sans CJK SC',sans-serif;font-size:30.5px;line-height:30.5px;color:#6e6e6e;letter-spacing:0.89px;left:557.5px;top:1378.1px;">invokeForRequest:141, InvocableHandlerMethod</span>
<span style="font-family:'Liberation Sans','Noto Sans CJK SC',sans-serif;font-size:30.5px;line-height:30.5px;color:#6e6e6e;font-style:italic;letter-spacing:1.35px;left:1268.2px;top:1378.1px;width:185.8px;overflow:hidden;">(org.springframework.web.method.support)</span>
<span style="font-family:'Liberation Sans','Noto Sans CJK SC',sans-serif;font-size:30.5px;line-height:30.5px;color:#6e6e6e;letter-spacing:1.06px;left:557.5px;top:1428.1px;">invokeAndHandle:106, ServletInvocableHandlerMethod</span>
<span style="font-family:'Liberation Sans','Noto Sans CJK SC',sans-serif;font-size:30.5px;line-height:30.5px;color:#6e6e6e;font-style:italic;letter-spacing:1.35px;left:1368.3px;top:1428.1px;width:85.7px;overflow:hidden;">(org.springframework.web.servlet.mvc.method.annotation)</span>
<span style="font-family:'Liberation Sans','Noto Sans CJK SC',sans-serif;font-size:30.5px;line-height:30.5px;color:#6e6e6e;letter-spacing:1.19px;left:557.5px;top:1478.1px;">invokeHandlerMethod:895, RequestMappingHandlerAdapter</span>
<span style="font-family:'Liberation Sans','Noto Sans CJK SC',sans-serif;font-size:30.5px;line-height:30.5px;color:#6e6e6e;font-style:italic;letter-spacing:1.35px;left:1445.8px;top:1478.1px;width:8.2px;overflow:hidden;">(org.springframework.web.servlet.mvc.method.annotation)</span>
<span style="font-family:'Liberation Sans','Noto Sans CJK SC',sans-serif;font-size:30.5px;line-height:30.5px;color:#6e6e6e;letter-spacing:1.14px;left:557.5px;top:1528.1px;">handleInternal:808, RequestMappingHandlerAdapter</span>
<span style="font-family:'Liberation Sans','Noto Sans CJK SC',sans-serif;font-size:30.5px;line-height:30.5px;color:#6e6e6e;font-style:italic;letter-spacing:1.35px;left:1334.5px;top:1528.1px;width:119.5px;overflow:hidden;">(org.springframework.web.servlet.mvc.method.annotation)</span>
<span style="font-family:'Liberation Sans','Noto Sans CJK SC',sans-serif;font-size:30.5px;line-height:30.5px;color:#6e6e6e;letter-spacing:1.31px;left:557.5px;top:1578.1px;">handle:87, AbstractHandlerMethodAdapter</span>
<span style="font-family:'Liberation Sans','Noto Sans CJK SC',sans-serif;font-size:30.5px;line-height:30.5px;color:#6e6e6e;font-style:italic;letter-spacing:1.35px;left:1193.1px;top:1578.1px;width:260.9px;overflow:hidden;">(org.springframework.web.servlet.mvc.method)</span>
<span style="font-family:'Liberation Sans','Noto Sans CJK SC',sans-serif;font-size:30.5px;line-height:30.5px;color:#6e6e6e;letter-spacing:1.20px;left:557.5px;top:1628.1px;">doDispatch:1064, DispatcherServlet</span>
<span style="font-family:'Liberation Sans','Noto Sans CJK SC',sans-serif;font-size:30.5px;line-height:30.5px;color:#6e6e6e;font-style:italic;letter-spacing:1.35px;left:1093.0px;top:1628.1px;width:361.0px;overflow:hidden;">(org.springframework.web.servlet)</span>
<span style="font-family:'Liberation Sans','Noto Sans CJK SC',sans-serif;font-size:30.5px;line-height:30.5px;color:#6e6e6e;letter-spacing:1.25px;left:557.5px;top:1678.1px;">doService:963, DispatcherServlet</span>
<span style="font-family:'Liberation Sans','Noto Sans CJK SC',sans-serif;font-size:30.5px;line-height:30.5px;color:#6e6e6e;font-style:italic;letter-spacing:1.35px;left:1058.4px;top:1678.1px;width:395.6px;overflow:hidden;">(org.springframework.web.servlet)</span>
<span style="font-family:'Liberation Sans','Noto Sans CJK SC',sans-serif;font-size:30.5px;line-height:30.5px;color:#6e6e6e;letter-spacing:1.03px;left:557.5px;top:1728.1px;">processRequest:1006, FrameworkServlet</span>
<span style="font-family:'Liberation Sans','Noto Sans CJK SC',sans-serif;font-size:30.5px;line-height:30.5px;color:#6e6e6e;font-style:italic;letter-spacing:1.35px;left:1165.1px;top:1728.1px;width:288.9px;overflow:hidden;">(org.springframework.web.servlet)</span>
<span style="font-family:'Liberation Sans','Noto Sans CJK SC',sans-serif;font-size:30.5px;line-height:30.5px;color:#6e6e6e;letter-spacing:1.20px;left:557.5px;top:1778.1px;">doGet:898, FrameworkServlet</span>
<span style="font-family:'Liberation Sans','Noto Sans CJK SC',sans-serif;font-size:30.5px;line-height:30.5px;color:#6e6e6e;font-style:italic;letter-spacing:1.35px;left:1004.8px;top:1778.1px;width:449.2px;overflow:hidden;">(org.springframework.web.servlet)</span>
<span style="font-family:'Liberation Sans','Noto Sans CJK SC',sans-serif;font-size:28.0px;line-height:28.0px;color:#000;letter-spacing:1.22px;left:1486.4px;top:938.2px;">Variables</span>
<div style="left:1456px;top:988px;width:60px;height:810px;background:#efefef;"></div>
<div style="left:1516px;top:988px;width:2px;height:810px;background:#c6c6c6;"></div>
<div style="left:1518px;top:988px;width:1296px;height:810px;background:#fff;"></div>
<div style="left:1458px;top:1334px;width:56px;height:56px;background:#d2d2d2;border-radius:7px;"></div>
<svg style="left:1576.3px;top:1010.5px;" width="27" height="29" viewBox="0 0 27 29"><rect y="0" width="27" height="7" fill="#f9b75c"/><rect y="11" width="27" height="7" fill="#f9b75c"/><rect y="22" width="27" height="7" fill="#f9b75c"/></svg>
<svg style="left:1525.3px;top:1014px;" width="22" height="19" viewBox="0 0 22 19"><path d="M0 0 H22 L11.0 19 Z" fill="#9b9b9b"/></svg>
<span style="font-family:'Liberation Sans','Noto Sans CJK SC',sans-serif;font-size:30.5px;line-height:30.5px;color:#000;letter-spacing:1.11px;left:1617.8px;top:1009.1px;"><span style="position:static;color:#7a1010;">modelAndView</span><span style="position:static;color:#000;"> = </span><span style="position:static;color:#7b7b7b;">{ModelAndView@5253}</span><span style="position:static;color:#3f8bd8;"> ... toString()</span></span>
<svg style="left:1614.5px;top:1054px;" width="42" height="42" viewBox="0 0 42 42"><circle cx="21" cy="21" r="17.3" fill="#f9b75c"/><path d="M24.8 12.2 h-1.6 a3.6 3.6 0 0 0 -3.6 3.6 V30.5 M15.6 18.6 h8.6" fill="none" stroke="#4b3a24" stroke-width="2.5"/></svg>
<svg style="left:1569.8px;top:1064px;" width="19" height="22" viewBox="0 0 19 22"><path d="M0 0 L19 11.0 L0 22 Z" fill="#9b9b9b"/></svg>
<span style="font-family:'Liberation Sans','Noto Sans CJK SC',sans-serif;font-size:30.5px;line-height:30.5px;color:#000;letter-spacing:1.27px;left:1663.8px;top:1059.1px;"><span style="position:static;color:#7a1010;">view</span><span style="position:static;color:#000;"> = </span><span style="position:static;color:#008000;font-weight:bold;">"userList"</span></span>
<svg style="left:1614.5px;top:1104px;" width="42" height="42" viewBox="0 0 42 42"><circle cx="21" cy="21" r="17.3" fill="#f9b75c"/><path d="M24.8 12.2 h-1.6 a3.6 3.6 0 0 0 -3.6 3.6 V30.5 M15.6 18.6 h8.6" fill="none" stroke="#4b3a24" stroke-width="2.5"/></svg>
<svg style="left:1571.3px;top:1114px;" width="22" height="19" viewBox="0 0 22 19"><path d="M0 0 H22 L11.0 19 Z" fill="#9b9b9b"/></svg>
<span style="font-family:'Liberation Sans','Noto Sans CJK SC',sans-serif;font-size:30.5px;line-height:30.5px;color:#000;letter-spacing:1.24px;left:1663.8px;top:1109.1px;"><span style="position:static;color:#7a1010;">model</span><span style="position:static;color:#000;"> = </span><span style="position:static;color:#7b7b7b;">{ModelMap@5354}</span><span style="position:static;color:#3f8bd8;"> ... toString()</span></span>
<svg style="left:1660.5px;top:1154px;" width="42" height="42" viewBox="0 0 42 42"><circle cx="21" cy="21" r="17.3" fill="#f9b75c"/><path d="M24.8 12.2 h-1.6 a3.6 3.6 0 0 0 -3.6 3.6 V30.5 M15.6 18.6 h8.6" fill="none" stroke="#4b3a24" stroke-width="2.5"/></svg>
<svg style="left:1615.8px;top:1164px;" width="19" height="22" viewBox="0 0 19 22"><path d="M0 0 L19 11.0 L0 22 Z" fill="#9b9b9b"/></svg>
<span style="font-family:'Liberation Sans','Noto Sans CJK SC',sans-serif;font-size:30.5px;line-height:30.5px;color:#000;letter-spacing:1.13px;left:1709.8px;top:1159.1px;"><span style="position:static;color:#7a1010;">head</span><span style="position:static;color:#000;"> = </span><span style="position:static;color:#7b7b7b;">{LinkedHashMap$Entry@5355}</span><span style="position:static;color:#3f8bd8;"> ... toString()</span></span>
<svg style="left:1660.5px;top:1204px;" width="42" height="42" viewBox="0 0 42 42"><circle cx="21" cy="21" r="17.3" fill="#f9b75c"/><path d="M24.8 12.2 h-1.6 a3.6 3.6 0 0 0 -3.6 3.6 V30.5 M15.6 18.6 h8.6" fill="none" stroke="#4b3a24" stroke-width="2.5"/></svg>
<svg style="left:1615.8px;top:1214px;" width="19" height="22" viewBox="0 0 19 22"><path d="M0 0 L19 11.0 L0 22 Z" fill="#9b9b9b"/></svg>
<span style="font-family:'Liberation Sans','Noto Sans CJK SC',sans-serif;font-size:30.5px;line-height:30.5px;color:#000;letter-spacing:1.16px;left:1709.8px;top:1209.1px;"><span style="position:static;color:#7a1010;">tail</span><span style="position:static;color:#000;"> = </span><span style="position:static;color:#7b7b7b;">{LinkedHashMap$Entry@5356}</span><span style="position:static;color:#3f8bd8;"> ... toString()</span></span>
<svg style="left:1660.5px;top:1254px;" width="42" height="42" viewBox="0 0 42 42"><circle cx="21" cy="21" r="17.3" fill="#f9b75c"/><path d="M24.8 12.2 h-1.6 a3.6 3.6 0 0 0 -3.6 3.6 V30.5 M15.6 18.6 h8.6" fill="none" stroke="#4b3a24" stroke-width="2.5"/><ellipse cx="8" cy="6.3" rx="6.6" ry="3.9" transform="rotate(-33 8 6.3)" fill="#8392a6"/><path d="M11 8.5 L16 12" stroke="#8392a6" stroke-width="2"/></svg>
<span style="font-family:'Liberation Sans','Noto Sans CJK SC',sans-serif;font-size:30.5px;line-height:30.5px;color:#000;letter-spacing:1.13px;left:1709.8px;top:1259.1px;"><span style="position:static;color:#7a1010;">accessOrder</span><span style="position:static;color:#000;"> = </span><span style="position:static;color:#000;">false</span></span>
<svg style="left:1660.5px;top:1304px;" width="42" height="42" viewBox="0 0 42 42"><circle cx="21" cy="21" r="17.3" fill="#f9b75c"/><path d="M24.8 12.2 h-1.6 a3.6 3.6 0 0 0 -3.6 3.6 V30.5 M15.6 18.6 h8.6" fill="none" stroke="#4b3a24" stroke-width="2.5"/></svg>
<svg style="left:1617.3px;top:1314px;" width="22" height="19" viewBox="0 0 22 19"><path d="M0 0 H22 L11.0 19 Z" fill="#9b9b9b"/></svg>
<span style="font-family:'Liberation Sans','Noto Sans CJK SC',sans-serif;font-size:30.5px;line-height:30.5px;color:#000;letter-spacing:1.17px;left:1709.8px;top:1309.1px;"><span style="position:static;color:#7a1010;">table</span><span style="position:static;color:#000;"> = </span><span style="position:static;color:#7b7b7b;">{HashMap$Node[16]@5357}</span></span>
<span style="font-family:'Liberation Sans','Noto Sans CJK SC',sans-serif;font-size:30.5px;line-height:30.5px;color:#000;letter-spacing:1.15px;left:1709.8px;top:1359.1px;"><span style="position:static;color:#000;">Not showing null elements</span></span>
<svg style="left:1714.3px;top:1410.5px;" width="27" height="29" viewBox="0 0 27 29"><rect y="0" width="27" height="7" fill="#f9b75c"/><rect y="11" width="27" height="7" fill="#f9b75c"/><rect y="22" width="27" height="7" fill="#f9b75c"/></svg>
<svg style="left:1661.8px;top:1414px;" width="19" height="22" viewBox="0 0 19 22"><path d="M0 0 L19 11.0 L0 22 Z" fill="#9b9b9b"/></svg>
<span style="font-family:'Liberation Sans','Noto Sans CJK SC',sans-serif;font-size:30.5px;line-height:30.5px;color:#000;letter-spacing:1.18px;left:1755.8px;top:1409.1px;"><span style="position:static;color:#7a1010;">0</span><span style="position:static;color:#000;"> = </span><span style="position:static;color:#7b7b7b;">{LinkedHashMap$Entry@5355}</span><span style="position:static;color:#3f8bd8;"> ... toString()</span></span>
<svg style="left:1714.3px;top:1460.5px;" width="27" height="29" viewBox="0 0 27 29"><rect y="0" width="27" height="7" fill="#f9b75c"/><rect y="11" width="27" height="7" fill="#f9b75c"/><rect y="22" width="27" height="7" fill="#f9b75c"/></svg>
<svg style="left:1663.3px;top:1464px;" width="22" height="19" viewBox="0 0 22 19"><path d="M0 0 H22 L11.0 19 Z" fill="#9b9b9b"/></svg>
<span style="font-family:'Liberation Sans','Noto Sans CJK SC',sans-serif;font-size:30.5px;line-height:30.5px;color:#000;letter-spacing:1.18px;left:1755.8px;top:1459.1px;"><span style="position:static;color:#7a1010;">3</span><span style="position:static;color:#000;"> = </span><span style="position:static;color:#7b7b7b;">{LinkedHashMap$Entry@5356}</span><span style="position:static;color:#3f8bd8;"> ... toString()</span></span>
<svg style="left:1752.5px;top:1504px;" width="42" height="42" viewBox="0 0 42 42"><circle cx="21" cy="21" r="17.3" fill="#f9b75c"/><path d="M24.8 12.2 h-1.6 a3.6 3.6 0 0 0 -3.6 3.6 V30.5 M15.6 18.6 h8.6" fill="none" stroke="#4b3a24" stroke-width="2.5"/></svg>
<svg style="left:1707.8px;top:1514px;" width="19" height="22" viewBox="0 0 19 22"><path d="M0 0 L19 11.0 L0 22 Z" fill="#9b9b9b"/></svg>
<span style="font-family:'Liberation Sans','Noto Sans CJK SC',sans-serif;font-size:30.5px;line-height:30.5px;color:#000;letter-spacing:1.18px;left:1801.8px;top:1509.1px;"><span style="position:static;color:#7a1010;">before</span><span style="position:static;color:#000;"> = </span><span style="position:static;color:#7b7b7b;">{LinkedHashMap$Entry@5355}</span><span style="position:static;color:#3f8bd8;"> ... toString()</span></span>
<svg style="left:1752.5px;top:1554px;" width="42" height="42" viewBox="0 0 42 42"><circle cx="21" cy="21" r="17.3" fill="#f9b75c"/><path d="M24.8 12.2 h-1.6 a3.6 3.6 0 0 0 -3.6 3.6 V30.5 M15.6 18.6 h8.6" fill="none" stroke="#4b3a24" stroke-width="2.5"/></svg>
<span style="font-family:'Liberation Sans','Noto Sans CJK SC',sans-serif;font-size:30.5px;line-height:30.5px;color:#000;letter-spacing:1.39px;left:1801.8px;top:1559.1px;"><span style="position:static;color:#7a1010;">after</span><span style="position:static;color:#000;"> = </span><span style="position:static;color:#000;">null</span></span>
<svg style="left:1752.5px;top:1604px;" width="42" height="42" viewBox="0 0 42 42"><circle cx="21" cy="21" r="17.3" fill="#f9b75c"/><path d="M24.8 12.2 h-1.6 a3.6 3.6 0 0 0 -3.6 3.6 V30.5 M15.6 18.6 h8.6" fill="none" stroke="#4b3a24" stroke-width="2.5"/><ellipse cx="8" cy="6.3" rx="6.6" ry="3.9" transform="rotate(-33 8 6.3)" fill="#8392a6"/><path d="M11 8.5 L16 12" stroke="#8392a6" stroke-width="2"/></svg>
<span style="font-family:'Liberation Sans','Noto Sans CJK SC',sans-serif;font-size:30.5px;line-height:30.5px;color:#000;letter-spacing:1.33px;left:1801.8px;top:1609.1px;"><span style="position:static;color:#7a1010;">hash</span><span style="position:static;color:#000;"> = </span><span style="position:static;color:#000;">-266681581</span></span>
<svg style="left:1752.5px;top:1654px;" width="42" height="42" viewBox="0 0 42 42"><circle cx="21" cy="21" r="17.3" fill="#f9b75c"/><path d="M24.8 12.2 h-1.6 a3.6 3.6 0 0 0 -3.6 3.6 V30.5 M15.6 18.6 h8.6" fill="none" stroke="#4b3a24" stroke-width="2.5"/><ellipse cx="8" cy="6.3" rx="6.6" ry="3.9" transform="rotate(-33 8 6.3)" fill="#8392a6"/><path d="M11 8.5 L16 12" stroke="#8392a6" stroke-width="2"/></svg>
<svg style="left:1707.8px;top:1664px;" width="19" height="22" viewBox="0 0 19 22"><path d="M0 0 L19 11.0 L0 22 Z" fill="#9b9b9b"/></svg>
<span style="font-family:'Liberation Sans','Noto Sans CJK SC',sans-serif;font-size:30.5px;line-height:30.5px;color:#000;letter-spacing:1.22px;left:1801.8px;top:1659.1px;"><span style="position:static;color:#7a1010;">key</span><span style="position:static;color:#000;"> = </span><span style="position:static;color:#008000;font-weight:bold;">"userList"</span></span>
<svg style="left:1752.5px;top:1704px;" width="42" height="42" viewBox="0 0 42 42"><circle cx="21" cy="21" r="17.3" fill="#f9b75c"/><path d="M24.8 12.2 h-1.6 a3.6 3.6 0 0 0 -3.6 3.6 V30.5 M15.6 18.6 h8.6" fill="none" stroke="#4b3a24" stroke-width="2.5"/></svg>
<svg style="left:1707.8px;top:1714px;" width="19" height="22" viewBox="0 0 19 22"><path d="M0 0 L19 11.0 L0 22 Z" fill="#9b9b9b"/></svg>
<span style="font-family:'Liberation Sans','Noto Sans CJK SC',sans-serif;font-size:30.5px;line-height:30.5px;color:#000;letter-spacing:1.17px;left:1801.8px;top:1709.1px;"><span style="position:static;color:#7a1010;">value</span><span style="position:static;color:#000;"> = </span><span style="position:static;color:#7b7b7b;">{Collections$SingletonList@5360}</span><span style="position:static;color:#3f8bd8;"> ... toString()</span></span>
<svg style="left:1752.5px;top:1754px;" width="42" height="42" viewBox="0 0 42 42"><circle cx="21" cy="21" r="17.3" fill="#f9b75c"/><path d="M24.8 12.2 h-1.6 a3.6 3.6 0 0 0 -3.6 3.6 V30.5 M15.6 18.6 h8.6" fill="none" stroke="#4b3a24" stroke-width="2.5"/></svg>
<span style="font-family:'Liberation Sans','Noto Sans CJK SC',sans-serif;font-size:30.5px;line-height:30.5px;color:#000;letter-spacing:1.25px;left:1801.8px;top:1759.1px;"><span style="position:static;color:#7a1010;">next</span><span style="position:static;color:#000;"> = </span><span style="position:static;color:#000;">null</span></span>
<div style="left:1519px;top:988px;width:1295px;height:14px;overflow:hidden"><svg style="left:97px;top:-28px" width="42" height="42"><circle cx="21" cy="21" r="17.3" fill="#f9b75c"/></svg><span style="left:144px;top:-28.9px;font-family:'Liberation Sans','Noto Sans CJK SC',sans-serif;font-size:30.5px;line-height:30.5px;letter-spacing:1.2px;color:#7a1010;white-space:pre">response<span style="position:static;color:#000"> = </span><span style="position:static;color:#7b7b7b">{ResponseFacade@5278}</span></span></div>
<div style="left:2814px;top:921px;width:2px;height:877px;background:#c4c4c4;"></div>
<div style="left:2816px;top:988px;width:194px;height:76px;background:#efefef;"></div>
<div style="left:2816px;top:1064px;width:194px;height:734px;background:#fff;"></div>
<div style="left:2816px;top:982px;width:126px;height:6px;background:#8797b0;"></div>
<div style="left:2816px;top:921px;width:126px;height:61px;overflow:hidden"><span style="left:31.5px;top:17.0px;font-family:'Liberation Sans','Noto Sans CJK SC',sans-serif;font-size:28.0px;line-height:28.0px;letter-spacing:1.0px;color:#000">Memory</span></div>
<svg style="left:2964px;top:946px;" width="28" height="17" viewBox="0 0 28 17"><path d="M2 2 L14 14 L26 2" fill="none" stroke="#4a4a4a" stroke-width="3.3"/></svg>
<div style="left:2823px;top:996px;width:104px;height:61px;background:#fff;border:2px solid #bdbdbd;border-radius:9px;box-sizing:border-box;"></div>
<svg style="left:2843px;top:1009px;" width="36" height="36" viewBox="0 0 36 36"><circle cx="13.5" cy="13.5" r="10.5" fill="none" stroke="#7d7d7d" stroke-width="2.6"/><path d="M21 21 L32 32" stroke="#7d7d7d" stroke-width="3"/></svg>
<div style="left:2816px;top:1123px;width:194px;height:2px;background:#d9d9d9;"></div>
<div style="left:2844px;top:1067px;width:1.5px;height:54px;background:#cfcfcf;"></div>
<span style="font-family:'Liberation Sans','Noto Sans CJK SC',sans-serif;font-size:30.5px;line-height:30.5px;color:#000;left:2835.5px;top:1079.8px;">.</span>
<span style="font-family:'Liberation Sans','Noto Sans CJK SC',sans-serif;font-size:30.5px;line-height:30.5px;color:#000;letter-spacing:1.61px;left:2865.5px;top:1079.8px;">Count</span>
<span style="font-family:'Liberation Sans','Noto Sans CJK SC',sans-serif;font-size:30.5px;line-height:30.5px;color:#777;letter-spacing:1.09px;left:2815.0px;top:1341.6px;">s loaded.</span>
<span style="font-family:'Liberation Sans','Noto Sans CJK SC',sans-serif;font-size:30.5px;line-height:30.5px;color:#2a5eb2;letter-spacing:0.83px;left:2956.8px;top:1341.6px;">Loa</span>
<div style="left:0px;top:1798px;width:3054px;height:106px;background:#efefef;"></div>
<div style="left:0px;top:1798px;width:3054px;height:2px;background:#c4c4c4;"></div>
<div style="left:0px;top:1856px;width:3054px;height:1.5px;background:#d0d0d0;"></div>
<div style="left:892px;top:1800px;width:242px;height:56px;background:#b9b9b9;"></div>
<span style="font-family:'Liberation Sans','Noto Sans CJK SC',sans-serif;font-size:28.0px;line-height:28.0px;color:#000;letter-spacing:1.48px;left:106.6px;top:1816.2px;"><span style="position:static;text-decoration:underline;text-underline-offset:3px;text-decoration-thickness:2px">9</span>: Git</span>
<span style="font-family:'Liberation Sans','Noto Sans CJK SC',sans-serif;font-size:28.0px;line-height:28.0px;color:#000;letter-spacing:0.93px;left:268.6px;top:1816.2px;"><span style="position:static;text-decoration:underline;text-underline-offset:3px;text-decoration-thickness:2px">6</span>: TODO</span>
<span style="font-family:'Liberation Sans','Noto Sans CJK SC',sans-serif;font-size:28.0px;line-height:28.0px;color:#000;letter-spacing:0.86px;left:474.5px;top:1816.2px;"><span style="position:static;text-decoration:underline;text-underline-offset:3px;text-decoration-thickness:2px">4</span>: Run</span>
<span style="font-family:'Liberation Sans','Noto Sans CJK SC',sans-serif;font-size:28.0px;line-height:28.0px;color:#000;letter-spacing:0.90px;left:655.6px;top:1816.2px;">Java Enterprise</span>
<span style="font-family:'Liberation Sans','Noto Sans CJK SC',sans-serif;font-size:28.0px;line-height:28.0px;color:#000;letter-spacing:1.07px;left:956.9px;top:1816.2px;"><span style="position:static;text-decoration:underline;text-underline-offset:3px;text-decoration-thickness:2px">8</span>: Services</span>
<span style="font-family:'Liberation Sans','Noto Sans CJK SC',sans-serif;font-size:28.0px;line-height:28.0px;color:#000;letter-spacing:1.24px;left:1199.0px;top:1816.2px;">SpotBugs</span>
<span style="font-family:'Liberation Sans','Noto Sans CJK SC',sans-serif;font-size:28.0px;line-height:28.0px;color:#000;letter-spacing:1.53px;left:1416.6px;top:1816.2px;">Spring</span>
<span style="font-family:'Liberation Sans','Noto Sans CJK SC',sans-serif;font-size:28.0px;line-height:28.0px;color:#000;letter-spacing:1.13px;left:1594.6px;top:1816.2px;">CheckStyle</span>
<span style="font-family:'Liberation Sans','Noto Sans CJK SC',sans-serif;font-size:28.0px;line-height:28.0px;color:#000;letter-spacing:0.81px;left:1842.6px;top:1816.2px;">Sequence Diagram</span>
<span style="font-family:'Liberation Sans','Noto Sans CJK SC',sans-serif;font-size:28.0px;line-height:28.0px;color:#000;letter-spacing:1.27px;left:2190.4px;top:1816.2px;">SonarLint</span>
<span style="font-family:'Liberation Sans','Noto Sans CJK SC',sans-serif;font-size:28.0px;line-height:28.0px;color:#000;letter-spacing:1.50px;left:2409.2px;top:1816.2px;">Terminal</span>
<span style="font-family:'Liberation Sans','Noto Sans CJK SC',sans-serif;font-size:28.0px;line-height:28.0px;color:#000;letter-spacing:1.01px;left:2615.6px;top:1816.2px;">Build</span>
<span style="font-family:'Liberation Sans','Noto Sans CJK SC',sans-serif;font-size:28.0px;line-height:28.0px;color:#000;letter-spacing:0.94px;left:2769.1px;top:1816.2px;">Event Log</span>
<div style="left:2995px;top:1800px;width:59px;height:56px;overflow:hidden"><span style="left:6.6px;top:16.2px;font-family:'Liberation Sans','Noto Sans CJK SC',sans-serif;font-size:28.0px;line-height:28.0px;letter-spacing:1.05px;color:#000">VisualVM</span></div>
<span style="font-family:'Liberation Sans','Noto Sans CJK SC',sans-serif;font-size:28.0px;line-height:28.0px;color:#000;letter-spacing:0.94px;left:64.6px;top:1869.2px;">Loaded classes are up to date. Nothing to reload. (moments ago)</span>
<span style="font-family:'Liberation Sans','Noto Sans CJK SC',sans-serif;font-size:28.0px;line-height:28.0px;color:#000;letter-spacing:1.33px;left:2385.3px;top:1869.2px;">40:1</span>
<span style="font-family:'Liberation Sans','Noto Sans CJK SC',sans-serif;font-size:28.0px;line-height:28.0px;color:#000;letter-spacing:-0.49px;left:2475.2px;top:1869.2px;">LF</span>
<span style="font-family:'Liberation Sans','Noto Sans CJK SC',sans-serif;font-size:28.0px;line-height:28.0px;color:#000;letter-spacing:1.92px;left:2539.2px;top:1869.2px;">UTF-8</span>
<span style="font-family:'Liberation Sans','Noto Sans CJK SC',sans-serif;font-size:28.0px;line-height:28.0px;color:#000;letter-spacing:1.20px;left:2657.6px;top:1869.2px;">4 spaces</span>
<span style="font-family:'Liberation Sans','Noto Sans CJK SC',sans-serif;font-size:28.0px;line-height:28.0px;color:#000;letter-spacing:0.93px;left:2851.6px;top:1869.2px;">main</span>
<span style="font-family:'Liberation Sans','Noto Sans CJK SC',sans-serif;font-size:28.0px;line-height:28.0px;color:#000;letter-spacing:1.00px;left:5.7px;top:213.9px;transform-origin:0 0;transform:rotate(-90deg);"><span style="position:static;text-decoration:underline;text-underline-offset:3px;text-decoration-thickness:2px">1</span>: Project</span>
<span style="font-family:'Liberation Sans','Noto Sans CJK SC',sans-serif;font-size:28.0px;line-height:28.0px;color:#000;letter-spacing:1.10px;left:5.7px;top:465.9px;transform-origin:0 0;transform:rotate(-90deg);"><span style="position:static;text-decoration:underline;text-underline-offset:3px;text-decoration-thickness:2px">7</span>: Structure</span>
<span style="font-family:'Liberation Sans','Noto Sans CJK SC',sans-serif;font-size:28.0px;line-height:28.0px;color:#000;letter-spacing:0.97px;left:5.7px;top:657.9px;transform-origin:0 0;transform:rotate(-90deg);">Commit</span>
<span style="font-family:'Liberation Sans','Noto Sans CJK SC',sans-serif;font-size:28.0px;line-height:28.0px;color:#000;letter-spacing:1.18px;left:5.7px;top:1334.9px;transform-origin:0 0;transform:rotate(-90deg);"><span style="position:static;text-decoration:underline;text-underline-offset:3px;text-decoration-thickness:2px">2</span>: Favorites</span>
<span style="font-family:'Liberation Sans','Noto Sans CJK SC',sans-serif;font-size:28.0px;line-height:28.0px;color:#000;letter-spacing:1.21px;left:5.7px;top:1483.9px;transform-origin:0 0;transform:rotate(-90deg);">Web</span>
<span style="font-family:'Liberation Sans','Noto Sans CJK SC',sans-serif;font-size:28.0px;line-height:28.0px;color:#000;letter-spacing:0.97px;left:5.7px;top:1729.4px;transform-origin:0 0;transform:rotate(-90deg);">Persistence</span>
<span style="font-family:'Liberation Sans','Noto Sans CJK SC',sans-serif;font-size:28.0px;line-height:28.0px;color:#000;letter-spacing:1.35px;left:3047.2px;top:125.6px;transform-origin:0 0;transform:rotate(90deg);">jclasslib</span>
<span style="font-family:'Liberation Sans','Noto Sans CJK SC',sans-serif;font-size:28.0px;line-height:28.0px;color:#000;letter-spacing:2.38px;left:3047.2px;top:319.1px;transform-origin:0 0;transform:rotate(90deg);">Ant</span>
<span style="font-family:'Liberation Sans','Noto Sans CJK SC',sans-serif;font-size:28.0px;line-height:28.0px;color:#000;letter-spacing:0.31px;left:3047.3px;top:452.8px;transform-origin:0 0;transform:rotate(90deg);">Maven</span>
<span style="font-family:'Liberation Sans','Noto Sans CJK SC',sans-serif;font-size:28.0px;line-height:28.0px;color:#000;letter-spacing:0.42px;left:3047.3px;top:630.6px;transform-origin:0 0;transform:rotate(90deg);">Database</span>
<span style="font-family:'Liberation Sans','Noto Sans CJK SC',sans-serif;font-size:28.0px;line-height:28.0px;color:#000;letter-spacing:0.84px;left:3047.8px;top:852.1px;transform-origin:0 0;transform:rotate(90deg);">Bean Validation</span>
<span style="font-family:'Liberation Sans','Noto Sans CJK SC',sans-serif;font-size:38.5px;line-height:38.5px;color:#d0021b;left:1120.0px;top:702.1px;-webkit-text-stroke:0.5px #d0021b;">获取到了</span>
<span style="font-family:'Liberation Sans','Noto Sans CJK SC',sans-serif;font-size:38.5px;line-height:38.5px;color:#d0021b;letter-spacing:0.88px;left:1286.1px;top:702.1px;-webkit-text-stroke:0.4px #d0021b;">ModelAndView</span>
<svg style="left:1466px;top:6px;" width="42" height="40" viewBox="0 0 42 40"><path d="M4 17 L20 4.5" stroke="#2f9c4a" stroke-width="9.5" fill="none"/><path d="M16 10.5 L37.5 34" stroke="#2f9c4a" stroke-width="6.8" fill="none"/></svg>
<svg style="left:1556px;top:11px;" width="42.0" height="38.0" viewBox="0 0 42 38"><path d="M1.5 25.5 C-1 13 7 6.5 18 6 C26 5.6 31 3.5 34 0 C37.5 9 36.5 20 28.5 25.5 C21 30.5 9 30 3.5 27 Z" fill="#5fc250"/><path d="M3 28.5 L13 27" stroke="#5fc250" stroke-width="2.2"/><polygon points="37.7,24.0 32.1,33.7 20.9,33.7 15.3,24.0 20.9,14.3 32.1,14.3" fill="#8d9bb0" stroke="#f4f4f4" stroke-width="1.4"/><path d="M23.1 21.7 a4.800 4.800 0 1 0 6.800 0 M26.5 18.8 v5" fill="none" stroke="#f4f6f9" stroke-width="2"/></svg>
<svg style="left:1819px;top:11px;" width="26" height="30" viewBox="0 0 26 30"><path d="M0.5 0.5 L25 15 L0.5 29.5 Z" fill="#2f9c4a"/></svg>
<svg style="left:1882.5px;top:8.5px;" width="31.0" height="35.0" viewBox="0 0 31 35"><path d="M8 1.5 L13 8 M23 1.5 L18 8" stroke="#2f9c4a" stroke-width="3" fill="none"/><path d="M15.5 6 C23 6 25.5 12 25.5 20 C25.5 29 21.5 34.5 15.5 34.5 C9.500 34.5 5.5 29 5.5 20 C5.5 12 8 6 15.500 6 Z" fill="#2f9c4a"/><path d="M0.5 13.5 H30.5 M0.5 21 H30.5 M0.5 28.5 H30.5" stroke="#2f9c4a" stroke-width="4.2"/><path d="M10 17.3 H21 M10 24.800 H21" stroke="#efefef" stroke-width="3.2"/></svg>
<svg style="left:1947px;top:10px;" width="40" height="37" viewBox="0 0 40 37"><path d="M1.5 5 C9 4.500 12.5 3 14.500 1 C17 3 20.500 4.5 27.500 5 V12 H14.500 V28 H19 C17.500 29.500 16 30.300 14.500 31 C6 27.500 1.500 21 1.5 12 Z" fill="#5a5a5a"/><path d="M21.5 15 L38.5 25.5 L21.5 36 Z" fill="#2f9c4a"/></svg>
<svg style="left:2017px;top:8px;" width="40" height="40" viewBox="0 0 40 40"><path d="M27.900 19.500 A13 13 0 1 0 17.500 28.400" fill="none" stroke="#5a5a5a" stroke-width="3.800"/><path d="M15.2 8 V16.300 L10.500 21" fill="none" stroke="#5a5a5a" stroke-width="2.800"/><path d="M21.5 16.500 L39 27 L21.500 37.500 Z" fill="#2f9c4a"/></svg>
<svg style="left:2072px;top:21.5px;" width="20" height="11" viewBox="0 0 20 11"><path d="M0 0 H20 L10 10.500 Z" fill="#5a5a5a"/></svg>
<svg style="left:2118px;top:4px;" width="44" height="44" viewBox="0 0 44 44"><path d="M17 0 H37 L27 15 H40 L1 43 L13 22 H3 Z" fill="#b5b5b5"/><path d="M24 17 L42 29 L24 41 Z" fill="#c4c4c4"/></svg>
<svg style="left:2186px;top:4px;" width="44" height="44" viewBox="0 0 44 44"><path d="M17 0 H37 L27 15 H40 L1 43 L13 22 H3 Z" fill="#b5b5b5"/></svg>
<svg style="left:2206px;top:19px;" width="26" height="28" viewBox="0 0 26 28"><rect x="0" y="0" width="26" height="28" fill="#efefef" opacity="0"/></svg>
<svg style="left:2207.5px;top:20px;" width="23.25" height="26.25" viewBox="0 0 31 35"><path d="M8 1.5 L13 8 M23 1.5 L18 8" stroke="#b0b0b0" stroke-width="3" fill="none"/><path d="M15.5 6 C23 6 25.5 12 25.5 20 C25.5 29 21.5 34.5 15.5 34.5 C9.500 34.5 5.5 29 5.5 20 C5.5 12 8 6 15.500 6 Z" fill="#b0b0b0"/><path d="M0.5 13.5 H30.5 M0.5 21 H30.5 M0.5 28.5 H30.5" stroke="#b0b0b0" stroke-width="4.2"/><path d="M10 17.3 H21 M10 24.800 H21" stroke="#efefef" stroke-width="3.2"/></svg>
<svg style="left:2257px;top:5px;" width="34" height="40" viewBox="0 0 34 40"><circle cx="12" cy="26" r="11" fill="#f0562a"/><circle cx="29" cy="17" r="5.800" fill="#f0562a"/><path d="M12 17 L12.500 5.500 M16 18 L19 13" stroke="#f0562a" stroke-width="1.800"/><circle cx="12.500" cy="4" r="2.700" fill="#f0562a"/><circle cx="19.500" cy="12" r="2.300" fill="#f0562a"/><path d="M18 33 V40" stroke="#f0562a" stroke-width="1.800"/></svg>
<svg style="left:2278px;top:21.5px;" width="19" height="21" viewBox="0 0 19 21"><path d="M0 0 L18.500 10.500 L0 21 Z" fill="#2f9c4a" stroke="#efefef" stroke-width="1"/></svg>
<svg style="left:2324.5px;top:5px;" width="34" height="40" viewBox="0 0 34 40"><circle cx="12" cy="26" r="11" fill="#f0562a"/><circle cx="29" cy="17" r="5.800" fill="#f0562a"/><path d="M12 17 L12.500 5.500 M16 18 L19 13" stroke="#f0562a" stroke-width="1.800"/><circle cx="12.500" cy="4" r="2.700" fill="#f0562a"/><circle cx="19.500" cy="12" r="2.300" fill="#f0562a"/><path d="M18 33 V40" stroke="#f0562a" stroke-width="1.800"/></svg>
<svg style="left:2343.5px;top:22px;" width="20.46" height="23.1" viewBox="0 0 31 35"><path d="M8 1.5 L13 8 M23 1.5 L18 8" stroke="#2f9c4a" stroke-width="3" fill="none"/><path d="M15.5 6 C23 6 25.5 12 25.5 20 C25.5 29 21.5 34.5 15.5 34.5 C9.500 34.5 5.5 29 5.5 20 C5.5 12 8 6 15.500 6 Z" fill="#2f9c4a"/><path d="M0.5 13.5 H30.5 M0.5 21 H30.5 M0.5 28.5 H30.5" stroke="#2f9c4a" stroke-width="4.2"/><path d="M10 17.3 H21 M10 24.800 H21" stroke="#efefef" stroke-width="3.2"/></svg>
<div style="left:2399.5px;top:13px;width:25px;height:25.5px;background:#e0314b;"></div>
<svg style="left:2560px;top:9px;" width="32" height="32" viewBox="0 0 32 32"><path d="M27.500 3.500 L8 23" stroke="#3f8fdc" stroke-width="6.200" fill="none"/><path d="M1.500 9.500 V30 H22 Z" fill="#3f8fdc"/></svg>
<svg style="left:2625px;top:9px;" width="38" height="32" viewBox="0 0 38 32"><path d="M3.500 17.500 L13.500 26.500 L34.500 4" fill="none" stroke="#2f9c4a" stroke-width="6.500"/></svg>
<svg style="left:2691px;top:7px;" width="38" height="38" viewBox="0 0 38 38"><circle cx="19" cy="19" r="15" fill="none" stroke="#5a5a5a" stroke-width="4.600"/><path d="M19 9.500 V19.500 L26 23.500" fill="none" stroke="#5a5a5a" stroke-width="3.400"/></svg>
<svg style="left:2762px;top:8px;" width="36" height="34" viewBox="0 0 36 34"><path d="M10 9.500 H22 A10 10 0 0 1 22 30.500 H10" fill="none" stroke="#b5b5b5" stroke-width="4.200"/><path d="M1.500 9.500 L12.500 1 V18 Z" fill="#b5b5b5"/></svg>
<svg style="left:2847px;top:12px;" width="38" height="33" viewBox="0 0 38 33"><path d="M1 1 H14 L18 6 H35 V12.500 H26.500 V20.500 H17.500 V25.500 H1 Z" fill="#5a5a5a"/><rect x="28.500" y="14.500" width="7.500" height="7.500" fill="#3f8fdc"/><rect x="19" y="24" width="7.500" height="7.500" fill="#3f8fdc"/><rect x="28.500" y="24" width="7.500" height="7.500" fill="#3f8fdc"/></svg>
<svg style="left:2935px;top:10px;" width="38" height="32" viewBox="0 0 38 32"><rect x="1.700" y="1.700" width="34" height="28" fill="none" stroke="#5a5a5a" stroke-width="3.400"/><rect x="1" y="1" width="35.500" height="8" fill="#5a5a5a"/><path d="M9.500 12 L21 19 L9.500 26 Z" fill="#2f9c4a"/></svg>
<svg style="left:3003px;top:7px;" width="40" height="40" viewBox="0 0 40 40"><circle cx="14.500" cy="14.500" r="11" fill="none" stroke="#5a5a5a" stroke-width="4.600"/><path d="M22.500 22.500 L36.500 36.500" stroke="#5a5a5a" stroke-width="5.400"/></svg>
<svg style="left:2800px;top:788px;" width="40" height="40" viewBox="0 0 40 40"><circle cx="19.500" cy="19.500" r="15.500" fill="none" stroke="#5a5a5a" stroke-width="3.600"/><path d="M19.500 2 V12 M19.500 27 V37 M2 19.500 H12 M27 19.500 H37" stroke="#5a5a5a" stroke-width="3.600"/></svg>
<div style="left:2862.5px;top:785px;width:2px;height:46px;background:#c3c7ce;"></div>
<svg style="left:2891px;top:791px;" width="34" height="34" viewBox="0 0 34 34"><g transform="translate(17 17)"><rect x="-3.600" y="-16.500" width="7.200" height="8" transform="rotate(0)" fill="#5a5a5a"/><rect x="-3.600" y="-16.500" width="7.200" height="8" transform="rotate(45)" fill="#5a5a5a"/><rect x="-3.600" y="-16.500" width="7.200" height="8" transform="rotate(90)" fill="#5a5a5a"/><rect x="-3.600" y="-16.500" width="7.200" height="8" transform="rotate(135)" fill="#5a5a5a"/><rect x="-3.600" y="-16.500" width="7.200" height="8" transform="rotate(180)" fill="#5a5a5a"/><rect x="-3.600" y="-16.500" width="7.200" height="8" transform="rotate(225)" fill="#5a5a5a"/><rect x="-3.600" y="-16.500" width="7.200" height="8" transform="rotate(270)" fill="#5a5a5a"/><rect x="-3.600" y="-16.500" width="7.200" height="8" transform="rotate(315)" fill="#5a5a5a"/><circle r="9.200" fill="none" stroke="#5a5a5a" stroke-width="6.200"/></g></svg>
<div style="left:2961px;top:805.5px;width:30px;height:4px;background:#5a5a5a;"></div>
<svg style="left:135px;top:856px;" width="34" height="36" viewBox="0 0 34 36"><path d="M1 2.200 H31 M1 33 H31" stroke="#5a5a5a" stroke-width="4.200"/><path d="M7.500 15 L16 6.500 L24.500 15 Z M7.500 20.500 L16 29 L24.500 20.500 Z" fill="#5a5a5a"/></svg>
<svg style="left:203px;top:857px;" width="34" height="36" viewBox="0 0 34 36"><path d="M1 18 H31" stroke="#5a5a5a" stroke-width="4.200"/><path d="M7.500 3 L16 11.500 L24.500 3 Z M7.500 33 L16 24.500 L24.500 33 Z" fill="#5a5a5a"/></svg>
<div style="left:260px;top:850px;width:2px;height:48px;background:#cdcdcd;"></div>
<svg style="left:293px;top:861px;" width="36" height="38" viewBox="0 0 36 38"><rect x="0" y="0" width="11" height="11" fill="#5a5a5a"/><rect x="14.500" y="0" width="11" height="11" fill="#5a5a5a"/><rect x="0" y="14.500" width="11" height="11" fill="#5a5a5a"/><rect x="14.500" y="14.500" width="11" height="11" fill="#5a5a5a"/><path d="M19.500 28.500 H35 L27.200 36 Z" fill="#3a3a3a"/></svg>
<svg style="left:358px;top:858px;" width="40" height="42" viewBox="0 0 40 42"><path d="M0.500 1 H31.500 L19.500 15.500 V30 H12.500 V15.500 Z" fill="#5a5a5a"/><path d="M22.500 31.500 H38 L30.200 39 Z" fill="#3a3a3a"/></svg>
<svg style="left:422px;top:855px;" width="42" height="36" viewBox="0 0 42 36"><path d="M1.500 32.500 C6.500 31.500 7 28 7 24 V10 C7 4.500 10 2.500 14.500 2.500 H27.500 C32 2.500 35 4.500 35 10 V24 C35 28 35.500 31.500 40.500 32.500" fill="none" stroke="#5a5a5a" stroke-width="2.800"/><path d="M13 18 H29 M21 10 V26" stroke="#5a5a5a" stroke-width="3.400"/></svg>
<svg style="left:488px;top:866px;" width="20" height="14" viewBox="0 0 20 14"><path d="M1.500 1 L7.500 7 L1.500 13 M11 1 L17 7 L11 13" fill="none" stroke="#6e6e6e" stroke-width="2.200"/></svg>
<svg style="left:61px;top:862px;" width="38" height="40" viewBox="0 0 38 40"><path d="M23.500 12 H16 A12 12 0 1 0 16 36.500 H19" fill="none" stroke="#2f9c4a" stroke-width="5.400"/><path d="M20.500 0.500 L35.500 12 L20.500 23.500 Z" fill="#2f9c4a"/><rect x="20" y="25" width="13" height="13" fill="#5a5a5a"/></svg>
<svg style="left:61px;top:931px;" width="31.0" height="35.0" viewBox="0 0 31 35"><path d="M8 1.5 L13 8 M23 1.5 L18 8" stroke="#2f9c4a" stroke-width="3" fill="none"/><path d="M15.5 6 C23 6 25.5 12 25.5 20 C25.5 29 21.5 34.5 15.5 34.5 C9.500 34.5 5.5 29 5.5 20 C5.5 12 8 6 15.500 6 Z" fill="#2f9c4a"/><path d="M0.5 13.5 H30.5 M0.5 21 H30.5 M0.5 28.5 H30.5" stroke="#2f9c4a" stroke-width="4.2"/><path d="M10 17.3 H21 M10 24.800 H21" stroke="#efefef" stroke-width="3.2"/></svg>
<div style="left:80px;top:955px;width:14px;height:14px;background:#efefef;"></div>
<div style="left:81.5px;top:956.5px;width:12.5px;height:12.5px;background:#5a5a5a;"></div>
<div style="left:65px;top:1005px;width:26px;height:25.5px;background:#e0314b;"></div>
<svg style="left:59px;top:1067px;" width="38" height="38" viewBox="0 0 38 38"><path d="M1 19 H24" stroke="#2f9c4a" stroke-width="3.400"/><path d="M22 8.500 L37 19 L22 29.500 Z" fill="#2f9c4a"/><path d="M24 1 H12 L24 13 Z M24 37 H12 L24 25 Z" fill="#2f9c4a"/><path d="M14 3 L22 11 M14 35 L22 27" stroke="#2f9c4a" stroke-width="3"/></svg>
<svg style="left:59px;top:1136px;" width="38" height="36" viewBox="0 0 38 36"><path d="M19 0.500 L27 8.500 L19 16.500 L11 8.500 Z M19 19.500 L27 27.500 L19 35.500 L11 27.500 Z" fill="#8a96ab"/><path d="M9 10 L17 18 L9 26 L1 18 Z M29 10 L37 18 L29 26 L21 18 Z" fill="#3f8fdc"/></svg>
<svg style="left:61px;top:1204px;" width="34" height="34" viewBox="0 0 34 34"><path d="M28.500 18.500 A12.500 12.500 0 1 1 20 6.500" fill="none" stroke="#5a5a5a" stroke-width="5"/><path d="M17 13 L31.500 1 V15.500 Z" fill="#5a5a5a"/></svg>
<div style="left:54px;top:1264px;width:46px;height:1.5px;background:#c9c9c9;"></div>
<svg style="left:64px;top:1294px;" width="33" height="30" viewBox="0 0 33 30"><rect x="0.500" y="0.500" width="7.500" height="28.500" fill="#2f9c4a"/><path d="M12.500 0.500 L32 14.700 L12.500 29 Z" fill="#2f9c4a"/></svg>
<div style="left:67px;top:1364px;width:7.5px;height:26px;background:#b9b9b9;"></div>
<div style="left:80.5px;top:1364px;width:7.5px;height:26px;background:#b9b9b9;"></div>
<div style="left:54px;top:1420.5px;width:46px;height:1.5px;background:#c9c9c9;"></div>
<svg style="left:62px;top:1447px;" width="36" height="36" viewBox="0 0 36 36"><circle cx="23.500" cy="10.500" r="9.500" fill="#e0314b"/><circle cx="12" cy="23" r="11.500" fill="#e0314b" stroke="#efefef" stroke-width="1.600"/></svg>
<svg style="left:61px;top:1517px;" width="36" height="34" viewBox="0 0 36 34"><circle cx="17.500" cy="17" r="12.800" fill="#e0314b"/><path d="M2 30.500 L31.500 2.500" stroke="#efefef" stroke-width="7"/><path d="M2 30.500 L31.500 2.500" stroke="#5a5a5a" stroke-width="3"/></svg>
<div style="left:54px;top:1575.5px;width:46px;height:1.5px;background:#c9c9c9;"></div>
<svg style="left:60px;top:1606px;" width="37" height="32" viewBox="0 0 37 32"><path d="M0.500 6 H9 L12 1 H24.500 L27.500 6 H36 V31 H0.500 Z" fill="#5a5a5a"/><circle cx="18" cy="18" r="6.800" fill="none" stroke="#efefef" stroke-width="3.400"/></svg>
<div style="left:54px;top:1664.5px;width:46px;height:1.5px;background:#c9c9c9;"></div>
<svg style="left:62px;top:1696px;" width="32" height="28" viewBox="0 0 32 28"><rect x="0.500" y="0.500" width="17" height="11.500" fill="#5a5a5a"/><rect x="20" y="0.500" width="10.500" height="11.500" fill="#5a5a5a"/><rect x="0.500" y="14.500" width="30" height="12.500" fill="#5a5a5a"/></svg>
<svg style="left:71px;top:1767px;" width="20" height="14" viewBox="0 0 20 14"><path d="M1.500 1 L7.500 7 L1.500 13 M11 1 L17 7 L11 13" fill="none" stroke="#6e6e6e" stroke-width="2.200"/></svg>
<svg style="left:170px;top:925.5px;" width="42.0" height="38.0" viewBox="0 0 42 38"><path d="M1.5 25.5 C-1 13 7 6.5 18 6 C26 5.6 31 3.5 34 0 C37.5 9 36.5 20 28.5 25.5 C21 30.5 9 30 3.5 27 Z" fill="#5fc250"/><path d="M3 28.5 L13 27" stroke="#5fc250" stroke-width="2.2"/><polygon points="37.7,24.0 32.1,33.7 20.9,33.7 15.3,24.0 20.9,14.3 32.1,14.3" fill="#8d9bb0" stroke="#f4f4f4" stroke-width="1.4"/><path d="M23.1 21.7 a4.800 4.800 0 1 0 6.800 0 M26.5 18.8 v5" fill="none" stroke="#f4f6f9" stroke-width="2"/></svg>
<svg style="left:169px;top:973px;" width="40" height="38" viewBox="0 0 40 38"><path d="M2 27 C6 20 12 17 20 17.500 C25 18 28 21 31 24 L27 27 C24 24 20 23 16 24 C12 25 8 27 5 30 Z" fill="#e8a33d" stroke="#3a2a14" stroke-width="1.200"/><path d="M22 4 L25.500 9 H31 L34.500 4 L35 14 C35 19 32 21.500 28.300 21.500 C24.500 21.500 21.500 19 21.500 14 Z" fill="#f4c04e" stroke="#3a2a14" stroke-width="1.200"/><path d="M9 19 C4 17 3 12 7 9.500" fill="none" stroke="#1e1e1e" stroke-width="1.800"/><circle cx="25.800" cy="13.500" r="1.200" fill="#222"/><circle cx="31" cy="13.500" r="1.200" fill="#222"/><path d="M12 21 L14 25 M17 19.500 L18.500 24" stroke="#7a4a12" stroke-width="1.600"/></svg>
<svg style="left:262px;top:1078px;" width="40" height="38" viewBox="0 0 40 38"><path d="M2 27 C6 20 12 17 20 17.500 C25 18 28 21 31 24 L27 27 C24 24 20 23 16 24 C12 25 8 27 5 30 Z" fill="#e8a33d" stroke="#3a2a14" stroke-width="1.200"/><path d="M22 4 L25.500 9 H31 L34.500 4 L35 14 C35 19 32 21.500 28.300 21.500 C24.500 21.500 21.500 19 21.500 14 Z" fill="#f4c04e" stroke="#3a2a14" stroke-width="1.200"/><path d="M9 19 C4 17 3 12 7 9.500" fill="none" stroke="#1e1e1e" stroke-width="1.800"/><circle cx="25.800" cy="13.500" r="1.200" fill="#222"/><circle cx="31" cy="13.500" r="1.200" fill="#222"/><path d="M12 21 L14 25 M17 19.500 L18.500 24" stroke="#7a4a12" stroke-width="1.600"/><path d="M23.500 21 L37 29 L23.500 37 Z" fill="#3fae4d"/></svg>
<svg style="left:169px;top:1127px;" width="40" height="34" viewBox="0 0 40 34"><rect x="8.500" y="0.500" width="12.500" height="12.500" fill="#3f8fdc"/><path d="M0.500 15.500 H27.500 C29 13 29.500 10.500 28.500 8.500 C31.500 9.500 33 11.500 33.500 13.500 C35 13 36.500 13 37.500 13.500 C37 16 35 17.500 32 17.500 C29.500 25.500 23 30 14 30 C6 30 1 25 0.500 15.500 Z" fill="#3f8fdc"/><circle cx="11" cy="20.500" r="2.600" fill="none" stroke="#dbeeff" stroke-width="0.900"/><path d="M25.500 17 L38.500 25 L25.500 33 Z" fill="#3fae4d"/></svg>
<div style="left:1749px;top:867.5px;width:30px;height:5px;background:#5a5a5a;"></div>
<div style="left:1749px;top:877px;width:30px;height:7.8px;background:#3f8fdc;"></div>
<div style="left:1749px;top:890px;width:30px;height:5px;background:#5a5a5a;"></div>
<div style="left:1837px;top:890px;width:30px;height:5px;background:#5a5a5a;"></div>
<svg style="left:1833px;top:862px;" width="36" height="26" viewBox="0 0 36 26"><path d="M3 17.500 L16.500 4.500 L27 15" fill="none" stroke="#3f8fdc" stroke-width="4.600"/><path d="M34 8 V23 H18.500 Z" fill="#3f8fdc"/></svg>
<div style="left:1905px;top:890px;width:30px;height:5px;background:#5a5a5a;"></div>
<svg style="left:1907px;top:862px;" width="26" height="26" viewBox="0 0 26 26"><path d="M13 0.500 V15" stroke="#3f8fdc" stroke-width="5"/><path d="M1.500 13.500 H24.500 L13 24.500 Z" fill="#3f8fdc"/></svg>
<div style="left:1973px;top:890px;width:30px;height:5px;background:#5a5a5a;"></div>
<svg style="left:1975px;top:862px;" width="26" height="26" viewBox="0 0 26 26"><path d="M13 0.500 V15" stroke="#e0314b" stroke-width="5"/><path d="M1.500 13.500 H24.500 L13 24.500 Z" fill="#e0314b"/></svg>
<div style="left:2041px;top:890px;width:30px;height:5px;background:#5a5a5a;"></div>
<svg style="left:2043px;top:862px;" width="26" height="26" viewBox="0 0 26 26"><path d="M13 25.500 V11" stroke="#3f8fdc" stroke-width="5"/><path d="M1.500 13 H24.500 L13 1.500 Z" fill="#3f8fdc"/></svg>
<svg style="left:2106px;top:862px;" width="34" height="36" viewBox="0 0 34 36"><path d="M3 3 L18 17.500 M18 3 L3 17.500" stroke="#e0314b" stroke-width="4.800"/><path d="M14 20 V30.500 H29.500 V12.500 H21.500" fill="none" stroke="#5a5a5a" stroke-width="4.800"/></svg>
<svg style="left:2174px;top:862px;" width="38" height="38" viewBox="0 0 38 38"><path d="M3.500 3.500 L15 15" stroke="#3f8fdc" stroke-width="4.800"/><path d="M20.500 5.500 V20.500 H5.500 Z" fill="#3f8fdc"/><path d="M29.500 16.500 V34 M24.500 16.500 H34.500 M24.500 34 H34.500" stroke="#3a3a3a" stroke-width="2.200" fill="none"/></svg>
<svg style="left:2265px;top:865px;" width="30" height="30" viewBox="0 0 30 30"><rect width="30" height="30" fill="#5a5a5a"/><rect x="5" y="5" width="20" height="5" fill="#efefef"/><rect x="5.0" y="13.5" width="5" height="4.200" fill="#efefef"/><rect x="5.0" y="20.0" width="5" height="4.200" fill="#efefef"/><rect x="12.5" y="13.5" width="5" height="4.200" fill="#efefef"/><rect x="12.5" y="20.0" width="5" height="4.200" fill="#efefef"/><rect x="20.0" y="13.5" width="5" height="4.200" fill="#efefef"/><rect x="20.0" y="20.0" width="5" height="4.200" fill="#efefef"/></svg>
<svg style="left:2332px;top:866px;" width="32" height="28" viewBox="0 0 32 28"><path d="M0 3 H12 M19 3 H31 M0 13.500 H10 M17 13.500 H31 M0 24 H8 M15 24 H31" stroke="#c3c3c3" stroke-width="4.600"/><path d="M20 1 L10 26" stroke="#c3c3c3" stroke-width="3"/></svg>
<svg style="left:2960px;top:867px;" width="38" height="36" viewBox="0 0 38 36"><rect x="0.500" y="0.500" width="17.500" height="12" fill="#5a5a5a"/><rect x="21" y="0.500" width="12" height="12" fill="#5a5a5a"/><rect x="0.500" y="15.500" width="32.500" height="11.500" fill="#5a5a5a"/><path d="M23 28.500 H37 L30 35 Z" fill="#3a3a3a"/></svg>
<svg style="left:1265px;top:1011px;" width="26" height="30" viewBox="0 0 26 30"><path d="M13 29 V4" stroke="#b4b4b4" stroke-width="3.600"/><path d="M2 14 L13 3 L24 14" fill="none" stroke="#b4b4b4" stroke-width="3.600"/></svg>
<svg style="left:1333px;top:1011px;" width="26" height="30" viewBox="0 0 26 30"><path d="M13 1 V26" stroke="#5a5a5a" stroke-width="3.600"/><path d="M2 16 L13 27 L24 16" fill="none" stroke="#5a5a5a" stroke-width="3.600"/></svg>
<svg style="left:1398px;top:1010px;" width="32" height="32" viewBox="0 0 32 32"><path d="M0.500 0.500 H31 L19.500 14.500 V30 H12 V14.500 Z" fill="#5a5a5a"/></svg>
<svg style="left:1473px;top:1009px;" width="26" height="26" viewBox="0 0 26 26"><path d="M0 13 H26 M13 0 V26" stroke="#5a5a5a" stroke-width="5"/></svg>
<div style="left:1473.5px;top:1087.3px;width:25px;height:5px;background:#b2b2b2;"></div>
<svg style="left:1471px;top:1151px;" width="30" height="15" viewBox="0 0 30 15"><path d="M0 15 L15 0.500 L30 15 Z" fill="#c2c2c2"/></svg>
<svg style="left:1471px;top:1218px;" width="30" height="15" viewBox="0 0 30 15"><path d="M0 0 L15 14.500 L30 0 Z" fill="#c2c2c2"/></svg>
<svg style="left:1471px;top:1275px;" width="32" height="36" viewBox="0 0 32 36"><path d="M1.500 22 V1.500 H20" fill="none" stroke="#c2c2c2" stroke-width="3"/><rect x="7.500" y="7.500" width="23" height="27" fill="#c2c2c2"/><path d="M13 16.500 H25 M13 22 H25 M13 27.500 H25" stroke="#efefef" stroke-width="2.600"/></svg>
<svg style="left:1465px;top:1350px;" width="42" height="22" viewBox="0 0 42 22"><circle cx="11" cy="12" r="7.800" fill="none" stroke="#4a4a4a" stroke-width="4"/><circle cx="31" cy="12" r="7.800" fill="none" stroke="#4a4a4a" stroke-width="4"/><path d="M1 7 H41" stroke="#4a4a4a" stroke-width="3.400"/></svg>
<svg style="left:2956px;top:1009px;" width="33" height="33" viewBox="0 0 34 34"><g transform="translate(17 17)"><rect x="-3.600" y="-16.500" width="7.200" height="8" transform="rotate(0)" fill="#5a5a5a"/><rect x="-3.600" y="-16.500" width="7.200" height="8" transform="rotate(45)" fill="#5a5a5a"/><rect x="-3.600" y="-16.500" width="7.200" height="8" transform="rotate(90)" fill="#5a5a5a"/><rect x="-3.600" y="-16.500" width="7.200" height="8" transform="rotate(135)" fill="#5a5a5a"/><rect x="-3.600" y="-16.500" width="7.200" height="8" transform="rotate(180)" fill="#5a5a5a"/><rect x="-3.600" y="-16.500" width="7.200" height="8" transform="rotate(225)" fill="#5a5a5a"/><rect x="-3.600" y="-16.500" width="7.200" height="8" transform="rotate(270)" fill="#5a5a5a"/><rect x="-3.600" y="-16.500" width="7.200" height="8" transform="rotate(315)" fill="#5a5a5a"/><circle r="9.200" fill="none" stroke="#5a5a5a" stroke-width="6.200"/></g></svg>
<svg style="left:2975px;top:1034px;" width="16" height="9" viewBox="0 0 16 9"><path d="M0 0 H16 L8 8.500 Z" fill="#3a3a3a"/></svg>
<svg style="left:72px;top:1814px;" width="28" height="28" viewBox="0 0 28 28"><path d="M3 0.500 V27" stroke="#616161" stroke-width="4.600"/><path d="M3 18.500 H17 V9" fill="none" stroke="#616161" stroke-width="4.600"/><path d="M8.500 11 L17 1.500 L25.500 11 Z" fill="#616161"/></svg>
<svg style="left:235px;top:1817px;" width="25" height="21" viewBox="0 0 25 21"><rect x="0" y="0" width="4.600" height="4.600" fill="#616161"/><rect x="8" y="0" width="16.500" height="4.600" fill="#616161"/><rect x="0" y="8" width="4.600" height="4.600" fill="#616161"/><rect x="8" y="8" width="16.500" height="4.600" fill="#616161"/><rect x="0" y="16" width="4.600" height="4.600" fill="#616161"/><rect x="8" y="16" width="16.500" height="4.600" fill="#616161"/></svg>
<svg style="left:440.5px;top:1816px;" width="20" height="24" viewBox="0 0 20 24"><path d="M0 0 L19.500 11.700 L0 23.400 Z" fill="#616161"/></svg>
<svg style="left:618px;top:1814.5px;" width="31" height="30" viewBox="0 0 31 30"><path d="M0.500 0.500 H24.500 V8 H8.500 V23 H0.500 Z" fill="#616161"/><rect x="11" y="11" width="19" height="17.500" fill="#616161"/><path d="M14 15 H19 M14 19.700 H18 M14 24.500 H19 M14.700 15 V24.500 M22.500 15 H27.500 M22.500 19.700 H26.500 M22.500 24.500 H27.500 M23.200 15 V24.500" stroke="#efefef" stroke-width="1.800" fill="none"/></svg>
<svg style="left:917px;top:1814px;" width="38" height="32" viewBox="0 0 38 32"><path d="M8 0.500 H24 L31.500 13.500 L24 26.500 H8 L0.500 13.500 Z" fill="#616161"/><path d="M11.500 6 L23.500 13.500 L11.500 21 Z" fill="#b9b9b9"/><circle cx="28" cy="25.500" r="6.200" fill="#3fb950" stroke="#b9b9b9" stroke-width="1.400"/></svg>
<svg style="left:1159px;top:1811px;" width="34" height="34" viewBox="0 0 34 34"><path d="M11.500 4.500 A6 6 0 0 1 22.500 4.500 Z" fill="#616161"/><path d="M8.500 7 H25.500 V21 C25.500 28 21.500 31.500 17 31.500 C12.500 31.500 8.500 28 8.500 21 Z" fill="#616161"/><path d="M1.500 7 L8.500 12 M32.500 7 L25.500 12 M0.500 18 H8.500 M33.500 18 H25.500 M2 31 L9.500 24.500 M32 31 L24.500 24.500" stroke="#616161" stroke-width="2.600"/><path d="M17 10 V31" stroke="#efefef" stroke-width="1.600"/></svg>
<svg style="left:1378px;top:1812px;" width="32" height="28" viewBox="0 0 32 28"><path d="M1 20.500 C-1 11 6 6 15 5.500 C22 5 26.500 3 29 0 C32.500 8 31.500 17 24.500 22 C18 26.500 8.500 26 3 23 Z" fill="#616161"/><path d="M2 25.500 C8 22 13 21 20 15" fill="none" stroke="#efefef" stroke-width="1.300"/></svg>
<span style="font-family:'Liberation Sans','Noto Sans CJK SC',sans-serif;font-size:22px;line-height:22px;color:#4a4a4a;font-weight:bold;letter-spacing:0.50px;left:1556.4px;top:1817.3px;">CS</span>
<svg style="left:1557px;top:1836.5px;" width="30" height="7" viewBox="0 0 30 7"><path d="M0.500 3.500 q2.400 -4 4.800 0 t4.800 0 t4.800 0 t4.800 0 t4.800 0 t4.800 0" fill="none" stroke="#e8452c" stroke-width="2"/></svg>
<svg style="left:1804px;top:1815px;" width="33" height="27" viewBox="0 0 33 27"><rect x="11.500" y="1" width="9.500" height="24.500" fill="#f5a623" stroke="#333" stroke-width="2"/><path d="M0 5.500 H8" stroke="#333" stroke-width="2"/><path d="M6.500 1.500 L11 5.500 L6.500 9.500 Z" fill="#333"/><path d="M21 14.500 H28" stroke="#333" stroke-width="2"/><path d="M27 10.500 L32 14.500 L27 18.500 Z" fill="#333"/></svg>
<svg style="left:2151px;top:1811.5px;" width="34" height="34" viewBox="0 0 34 34"><circle cx="16.700" cy="16.200" r="14.300" fill="none" stroke="#e0262e" stroke-width="2.800"/><path d="M5.500 16.500 q1.900 -5 3.800 0 t3.800 0 t3.800 0 t3.800 0 t3.800 0 t3.800 0" fill="none" stroke="#e0262e" stroke-width="2"/></svg>
<svg style="left:2372px;top:1814.5px;" width="28" height="25" viewBox="0 0 28 25"><rect width="27.500" height="24.500" fill="#616161"/><path d="M5 5.500 L11.500 11 L5 16.500" fill="none" stroke="#efefef" stroke-width="2.600"/><path d="M13 18.500 H22" stroke="#efefef" stroke-width="2.600"/></svg>
<svg style="left:2575px;top:1813px;" width="34" height="30" viewBox="0 0 34 30"><path d="M3 13 L15.500 3.500" stroke="#616161" stroke-width="7.600" fill="none"/><path d="M12 8 L30 27" stroke="#616161" stroke-width="5.600" fill="none"/></svg>
<svg style="left:2729px;top:1811.5px;" width="34" height="33" viewBox="0 0 34 33"><path d="M16.500 0.500 A16 16 0 0 1 32.500 16.500 V32.500 H16.500 A16 16 0 0 1 16.500 0.500 Z" fill="#f0894a"/></svg>
<span style="font-family:'Liberation Sans','Noto Sans CJK SC',sans-serif;font-size:23px;line-height:23px;color:#2b2b2b;font-weight:bold;left:2736.8px;top:1817.0px;">8</span>
<svg style="left:2954px;top:1808px;" width="41" height="38" viewBox="0 0 41 38"><rect x="1" y="1" width="39" height="36" fill="#f6f6f6" stroke="#8a8a8a" stroke-width="2"/><rect x="4" y="4" width="33" height="5" fill="#9ab3d6"/><path d="M4 14 H37 M4 21.500 H37 M4 29 H37 M12 10 V34 M21 10 V34 M30 10 V34" stroke="#d0d0d0" stroke-width="1"/><rect x="5" y="15" width="12" height="3.600" fill="#5fc250"/><rect x="17" y="15" width="5" height="3.600" fill="#e8452c"/><rect x="22" y="15" width="13" height="3.600" fill="#f5c02c"/><rect x="5" y="26" width="10" height="3.600" fill="#f5c02c"/><rect x="15" y="26" width="14" height="3.600" fill="#5fc250"/><rect x="29" y="26" width="6" height="3.600" fill="#f5c02c"/></svg>
<svg style="left:5px;top:1869px;" width="31" height="30" viewBox="0 0 31 30"><rect x="6.500" y="1.200" width="22.500" height="21" fill="none" stroke="#616161" stroke-width="2.200"/><path d="M1.200 7 V28 H23" fill="none" stroke="#616161" stroke-width="2.200"/></svg>
<svg style="left:2814px;top:1866px;" width="28" height="35" viewBox="0 0 28 35"><circle cx="5.500" cy="5" r="4.200" fill="#616161"/><circle cx="5.500" cy="30" r="4.200" fill="#616161"/><circle cx="22" cy="9.500" r="4.200" fill="#616161"/><path d="M5.500 5 V30 M5.500 21.500 H17 A5 5 0 0 0 22 16.500 V9.500" fill="none" stroke="#616161" stroke-width="4"/></svg>
<svg style="left:2942px;top:1875px;" width="30" height="23" viewBox="0 0 30 23"><rect x="8" y="9" width="20" height="13" fill="#616161"/><path d="M2.200 11 V7 A4.800 4.800 0 0 1 11.800 7 V10" fill="none" stroke="#616161" stroke-width="2.600"/></svg>
<svg style="left:3004px;top:1866px;" width="33" height="33" viewBox="0 0 33 33"><path d="M8.500 11 V5.500 C8.500 2 11 0.500 16 0.500 C21 0.500 23.500 2 23.500 5.500 V11 Z" fill="#616161"/><path d="M1.500 11.500 H30.500" stroke="#616161" stroke-width="3"/><circle cx="16" cy="18.500" r="7.200" fill="none" stroke="#616161" stroke-width="2"/><circle cx="13.200" cy="17" r="1.300" fill="#616161"/><circle cx="18.800" cy="17" r="1.300" fill="#616161"/><path d="M12.500 20.500 Q16 23.500 19.500 20.500" fill="none" stroke="#616161" stroke-width="1.500"/><path d="M3.500 32.500 C5 27 9.500 25.500 16 28.500 C22.500 25.500 27 27 28.500 32.500 Z" fill="#616161"/></svg>
<svg style="left:2px;top:223px;" width="28" height="25" viewBox="0 0 28 25"><path d="M0.500 0.500 H12 L15 6 H27 V24 H0.500 Z" fill="#616161"/></svg>
<svg style="left:5px;top:476px;" width="26" height="26" viewBox="0 0 26 26"><rect x="13.500" y="0.500" width="10.500" height="10.500" fill="#616161"/><rect x="0.500" y="14" width="10.500" height="10.500" fill="#616161"/><rect x="13.500" y="14" width="10.500" height="10.500" fill="#616161"/></svg>
<svg style="left:1px;top:666px;" width="32" height="30" viewBox="0 0 32 30"><circle cx="16" cy="14.500" r="7.200" fill="none" stroke="#616161" stroke-width="4"/><path d="M0 14.500 H8 M24 14.500 H32" stroke="#616161" stroke-width="4"/></svg>
<svg style="left:2px;top:1340px;" width="32" height="31" viewBox="0 0 32 31"><path d="M15.500 0.500 L19.200 11 H30.500 L21.500 17.700 L25 28.500 L15.500 22 L6 28.500 L9.500 17.700 L0.500 11 H11.800 Z" fill="#616161"/></svg>
<svg style="left:2px;top:1494px;" width="30" height="30" viewBox="0 0 30 30"><circle cx="14.500" cy="14.500" r="12.500" fill="none" stroke="#616161" stroke-width="3.200"/><path d="M4 9 C8 7 11 9 12 13 C13 17 9 18 8.500 22 C6 20 3.500 16 4 9 Z M14 3 C20 3 24 6 25.500 10 C22 12 18 10.500 17 7.500 Z M18 17 C21 15.500 24.500 16.500 25.500 19 C24 23 21 25.500 17.500 26 C16.500 22.500 16.500 19 18 17 Z" fill="#616161"/></svg>
<svg style="left:2px;top:1740px;" width="30" height="30" viewBox="0 0 30 30"><rect x="0.500" y="0.500" width="24" height="19" fill="#616161"/><rect x="11" y="9" width="18.500" height="20.500" fill="#efefef"/><path d="M13.500 12.500 H29 M13.500 16.500 H29 M13.500 20.500 H29 M13.500 24.500 H29 M13.500 28.500 H29" stroke="#616161" stroke-width="1.700"/></svg>
<svg style="left:3025px;top:89px;" width="22" height="30" viewBox="0 0 22 30"><rect width="22" height="30" fill="#c3dbf0"/><rect x="1.2" y="7.6" width="1.700" height="3.400" fill="#4a8ccc"/><rect x="1.2" y="13.2" width="1.700" height="3.400" fill="#4a8ccc"/><rect x="1.2" y="18.799999999999997" width="1.700" height="3.400" fill="#4a8ccc"/><rect x="3.8" y="2.0" width="1.700" height="3.400" fill="#4a8ccc"/><rect x="3.8" y="13.2" width="1.700" height="3.400" fill="#4a8ccc"/><rect x="3.8" y="18.799999999999997" width="1.700" height="3.400" fill="#4a8ccc"/><rect x="3.8" y="24.4" width="1.700" height="3.400" fill="#4a8ccc"/><rect x="6.4" y="2.0" width="1.700" height="3.400" fill="#4a8ccc"/><rect x="6.4" y="7.6" width="1.700" height="3.400" fill="#4a8ccc"/><rect x="6.4" y="18.799999999999997" width="1.700" height="3.400" fill="#4a8ccc"/><rect x="6.4" y="24.4" width="1.700" height="3.400" fill="#4a8ccc"/><rect x="9.0" y="2.0" width="1.700" height="3.400" fill="#4a8ccc"/><rect x="9.0" y="7.6" width="1.700" height="3.400" fill="#4a8ccc"/><rect x="9.0" y="13.2" width="1.700" height="3.400" fill="#4a8ccc"/><rect x="9.0" y="24.4" width="1.700" height="3.400" fill="#4a8ccc"/><rect x="11.6" y="7.6" width="1.700" height="3.400" fill="#4a8ccc"/><rect x="11.6" y="13.2" width="1.700" height="3.400" fill="#4a8ccc"/><rect x="11.6" y="18.799999999999997" width="1.700" height="3.400" fill="#4a8ccc"/><rect x="14.2" y="2.0" width="1.700" height="3.400" fill="#4a8ccc"/><rect x="14.2" y="13.2" width="1.700" height="3.400" fill="#4a8ccc"/><rect x="14.2" y="18.799999999999997" width="1.700" height="3.400" fill="#4a8ccc"/><rect x="14.2" y="24.4" width="1.700" height="3.400" fill="#4a8ccc"/><rect x="16.8" y="2.0" width="1.700" height="3.400" fill="#4a8ccc"/><rect x="16.8" y="7.6" width="1.700" height="3.400" fill="#4a8ccc"/><rect x="16.8" y="18.799999999999997" width="1.700" height="3.400" fill="#4a8ccc"/><rect x="16.8" y="24.4" width="1.700" height="3.400" fill="#4a8ccc"/><rect x="19.4" y="2.0" width="1.700" height="3.400" fill="#4a8ccc"/><rect x="19.4" y="7.6" width="1.700" height="3.400" fill="#4a8ccc"/><rect x="19.4" y="13.2" width="1.700" height="3.400" fill="#4a8ccc"/><rect x="19.4" y="24.4" width="1.700" height="3.400" fill="#4a8ccc"/></svg>
<svg style="left:3022px;top:281px;" width="27" height="29" viewBox="0 0 27 29"><ellipse cx="13.500" cy="9" rx="5" ry="5.500" fill="#616161"/><ellipse cx="13.500" cy="20" rx="6" ry="7.500" fill="#616161"/><path d="M2 2 L9.500 11 M25 2 L17.500 11 M0.500 14.500 H9 M26.500 14.500 H18 M2 27 L9 17 M25 27 L18 17" stroke="#616161" stroke-width="2.400" fill="none"/></svg>
<span style="font-family:'Liberation Sans','Noto Sans CJK SC',sans-serif;font-size:34px;line-height:34px;color:#616161;font-weight:bold;font-style:italic;left:3018.3px;top:408.1px;">m</span>
<svg style="left:3022px;top:590px;" width="28" height="30" viewBox="0 0 28 30"><ellipse cx="14" cy="5.500" rx="13.500" ry="5" fill="#616161"/><path d="M0.500 9 C3 13.500 25 13.500 27.500 9 V14 C25 19 3 19 0.500 14 Z M0.500 17.500 C3 22 25 22 27.500 17.500 V22.500 C25 27.500 3 27.500 0.500 22.500 Z" fill="#616161"/></svg>
<svg style="left:3020px;top:813px;" width="30" height="30" viewBox="0 0 30 30"><path d="M14.500 1 A13 13 0 1 0 27.500 14 L14.500 14 Z" fill="#616161"/><path d="M4.500 6 L22 24" stroke="#efefef" stroke-width="2.600"/><path d="M16.500 21 L21 25.500 L29 16.500" fill="none" stroke="#616161" stroke-width="3.200"/></svg>
<svg style="left:0;top:0;pointer-events:none" width="3054" height="1904" viewBox="0 0 3054 1904"><path d="M749.5 555 L1586 1001" stroke="#d0021b" stroke-width="8.7" fill="none"/><path d="M1620 1021.8 L1593.3 989.6 L1577.9 1017.5 Z" fill="#d0021b"/></svg>
</div></body></html>
